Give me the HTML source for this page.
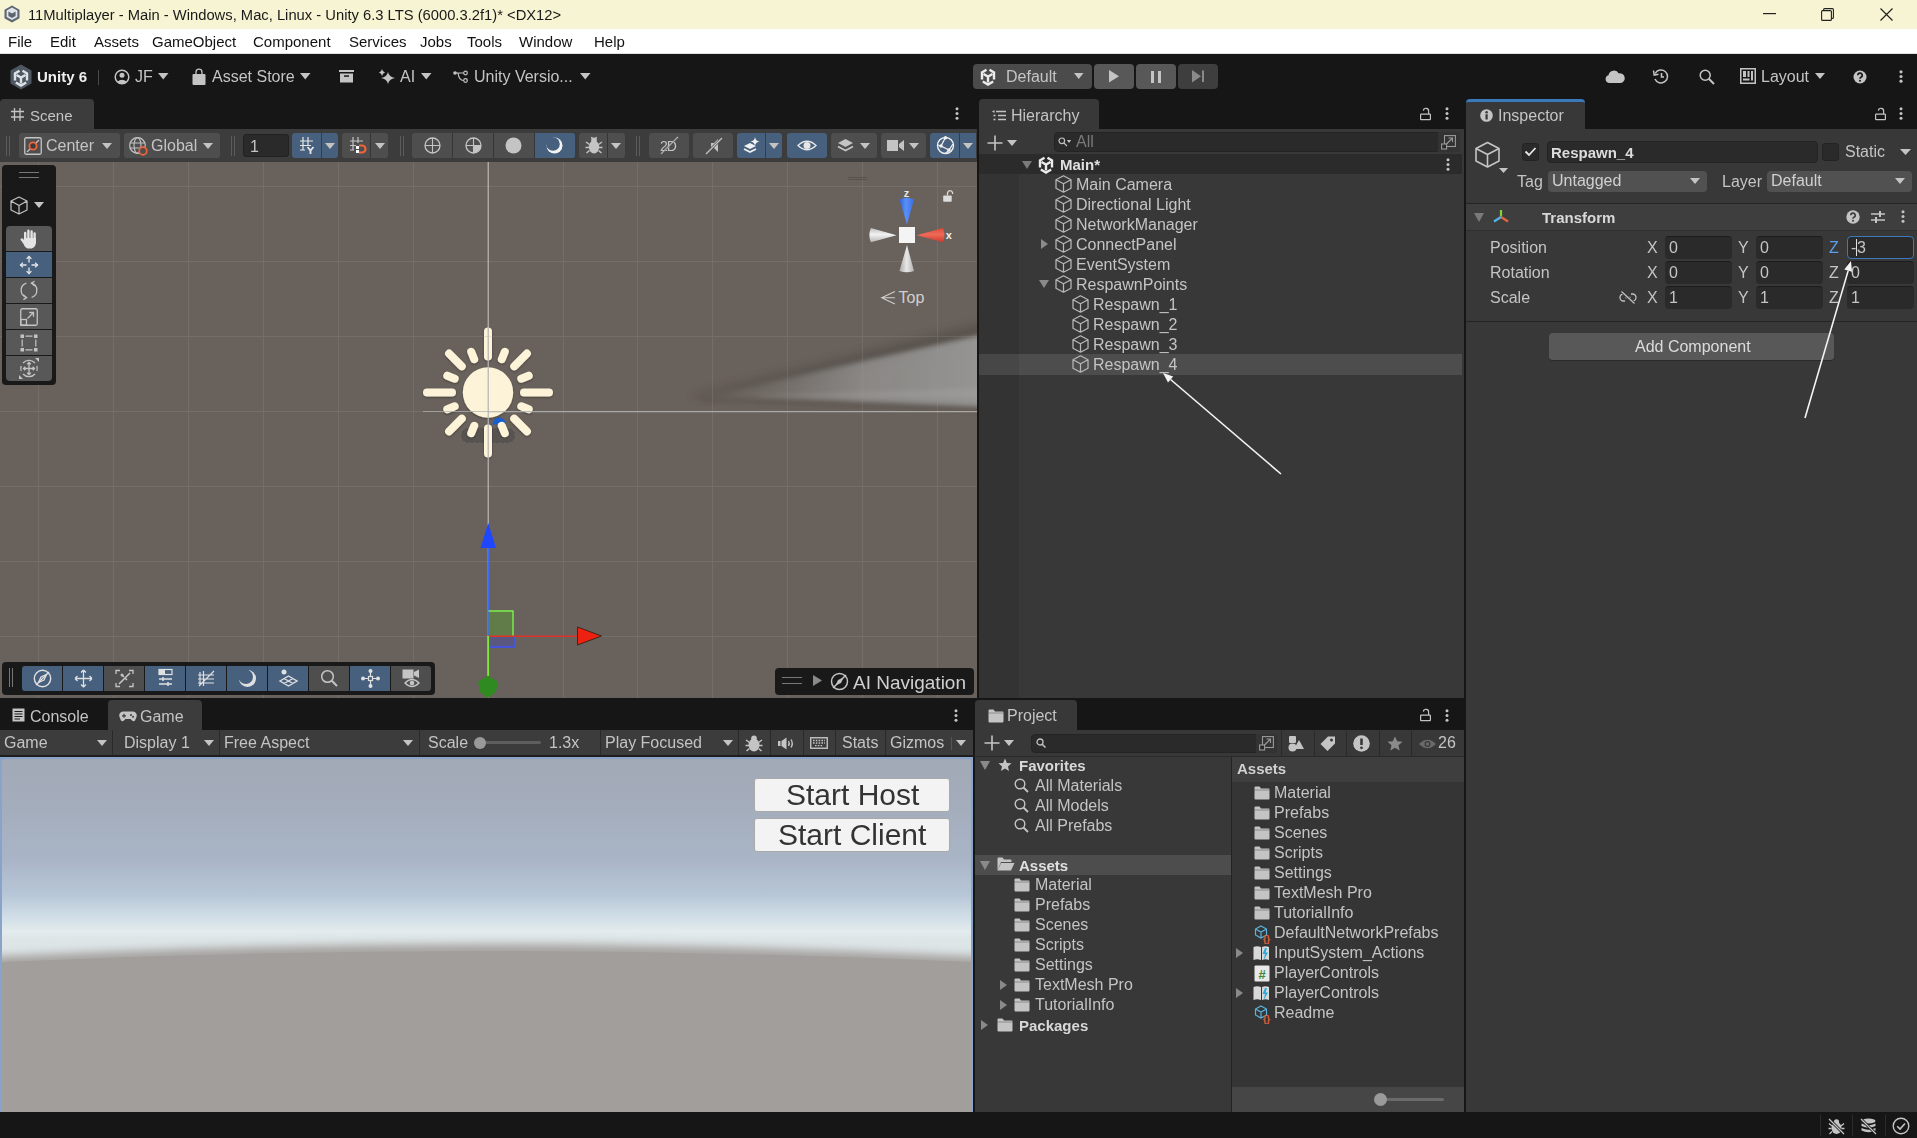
<!DOCTYPE html>
<html><head><meta charset="utf-8">
<style>
*{box-sizing:border-box;margin:0;padding:0}
html,body{width:1917px;height:1138px;overflow:hidden;background:#161616;font-family:"Liberation Sans",sans-serif;font-size:15px;color:#c4c4c4}
.a{position:absolute}
.t{position:absolute;white-space:pre;line-height:1;will-change:transform}
svg{position:absolute;overflow:visible}
#title{left:0;top:0;width:1917px;height:29px;background:#f7f4d3}
#menu{left:0;top:29px;width:1917px;height:25px;background:#fff;border-bottom:1px solid #e0e0e0}
#tb{left:0;top:54px;width:1917px;height:45px;background:#161616}
</style></head><body>
<div id="title" class="a">
  <svg style="left:3px;top:5px" width="18" height="18" viewBox="0 0 18 18"><path d="M9,0.5 L16.5,4.8 V13.2 L9,17.5 L1.5,13.2 V4.8Z" fill="#5d6670"/><path d="M9,3.5 L13.5,6 V11.5 L9,14 L4.5,11.5 V6Z" fill="none" stroke="#dfe3e8" stroke-width="1.8"/><path d="M9,3.5 L13.5,6 L9,8.5 L4.5,6Z" fill="#dfe3e8"/></svg>
  <svg style="left:1763px;top:13px" width="13" height="2"><rect width="13" height="1.2" fill="#222"/></svg>
  <svg style="left:1821px;top:8px" width="13" height="13" viewBox="0 0 13 13"><rect x="0.6" y="2.6" width="9.8" height="9.8" rx="1" fill="none" stroke="#222" stroke-width="1.1"/><path d="M2.6,2.6 V1.6 Q2.6,0.6 3.6,0.6 H11.4 Q12.4,0.6 12.4,1.6 V9.4 Q12.4,10.4 11.4,10.4 H10.4" fill="none" stroke="#222" stroke-width="1.1"/></svg>
  <svg style="left:1880px;top:8px" width="13" height="13" viewBox="0 0 13 13"><path d="M0.5,0.5 L12.5,12.5 M12.5,0.5 L0.5,12.5" stroke="#222" stroke-width="1.2"/></svg>
  <div class="t" style="left:28px;top:8px;font-size:14.75px;color:#1a1a1a">11Multiplayer - Main - Windows, Mac, Linux - Unity 6.3 LTS (6000.3.2f1)* &lt;DX12&gt;</div>
</div>
<div id="menu" class="a">
  <div class="t" style="left:8px;top:5px;color:#111">File</div>
  <div class="t" style="left:50px;top:5px;color:#111">Edit</div>
  <div class="t" style="left:94px;top:5px;color:#111">Assets</div>
  <div class="t" style="left:152px;top:5px;color:#111">GameObject</div>
  <div class="t" style="left:253px;top:5px;color:#111">Component</div>
  <div class="t" style="left:349px;top:5px;color:#111">Services</div>
  <div class="t" style="left:420px;top:5px;color:#111">Jobs</div>
  <div class="t" style="left:467px;top:5px;color:#111">Tools</div>
  <div class="t" style="left:519px;top:5px;color:#111">Window</div>
  <div class="t" style="left:594px;top:5px;color:#111">Help</div>
</div>
<div id="tb" class="a">
  <!-- unity logo -->
  <svg style="left:10px;top:10px" width="22" height="26" viewBox="0 0 22 26">
    <polygon points="11,0.5 21.5,6.5 21.5,19.5 11,25.5 0.5,19.5 0.5,6.5" fill="#4f5862"/>
    <g transform="translate(-1,1)" fill="none" stroke="#dfe3e8" stroke-width="2.4"><path d="M6,15.5 V8.5 L10.5,5.8"/><path d="M18,15.5 V8.5 L13.5,5.8"/><path d="M7.5,10 L12,12.6 L16.5,10 M12,12.6 V18.5"/><path d="M6.8,17.5 L12,20.5 L17.2,17.5"/></g>
  </svg>
  <div class="t" style="left:37px;top:15px;font-weight:700;color:#f0f0f0;font-size:15px">Unity 6</div>
  <div class="a" style="left:98px;top:16px;width:1px;height:15px;background:#4a4a4a"></div>
  <svg style="left:114px;top:15px" width="16" height="16" viewBox="0 0 16 16">
    <circle cx="8" cy="8" r="6.8" fill="none" stroke="#c4c4c4" stroke-width="1.5"/>
    <circle cx="8" cy="6.3" r="2.5" fill="#c4c4c4"/>
    <path d="M3.2,12.8 Q8,8.5 12.8,12.8 L11,14.5 L5,14.5 Z" fill="#c4c4c4"/>
  </svg>
  <div class="t" style="left:135px;top:15px;color:#c4c4c4;font-size:16px">JF</div>
  <svg style="left:158px;top:19px" width="11" height="7"><path d="M0,0 L10.5,0 L5.25,6.5Z" fill="#c4c4c4"/></svg>
  <svg style="left:192px;top:15px" width="14" height="16" viewBox="0 0 14 16">
    <path d="M4,5 V3.2 A3,3 0 0 1 10,3.2 V5" fill="none" stroke="#c4c4c4" stroke-width="1.3"/>
    <rect x="0.5" y="5" width="13" height="11" rx="1" fill="#c4c4c4"/>
  </svg>
  <div class="t" style="left:212px;top:15px;color:#c4c4c4;font-size:16px">Asset Store</div>
  <svg style="left:300px;top:19px" width="11" height="7"><path d="M0,0 L10.5,0 L5.25,6.5Z" fill="#c4c4c4"/></svg>
  <svg style="left:339px;top:16px" width="15" height="13" viewBox="0 0 15 13">
    <rect x="0" y="0" width="15" height="2" fill="#c4c4c4"/>
    <rect x="1" y="3.5" width="13" height="9" fill="#c4c4c4"/>
    <rect x="5" y="5.3" width="5" height="1.5" fill="#191919"/>
  </svg>
  <svg style="left:378px;top:15px" width="18" height="15" viewBox="0 0 18 15">
    <path d="M10,3 Q11,8 17,9 Q11,10 10,15 Q9,10 3,9 Q9,8 10,3Z" fill="#c4c4c4"/>
    <path d="M4,0 Q4.5,3 7,3.5 Q4.5,4 4,7 Q3.5,4 1,3.5 Q3.5,3 4,0Z" fill="#c4c4c4"/>
  </svg>
  <div class="t" style="left:400px;top:15px;color:#c4c4c4;font-size:16px">AI</div>
  <svg style="left:421px;top:19px" width="11" height="7"><path d="M0,0 L10.5,0 L5.25,6.5Z" fill="#c4c4c4"/></svg>
  <svg style="left:453px;top:16px" width="15" height="13" viewBox="0 0 15 13">
    <circle cx="2" cy="3" r="1.8" fill="#c4c4c4"/>
    <circle cx="12.5" cy="3" r="1.8" fill="none" stroke="#c4c4c4" stroke-width="1.2"/>
    <circle cx="12.5" cy="10.5" r="1.8" fill="none" stroke="#c4c4c4" stroke-width="1.2"/>
    <path d="M2,3 H10.5 M5,3 Q6,10.5 10.5,10.5" fill="none" stroke="#c4c4c4" stroke-width="1.2"/>
  </svg>
  <div class="t" style="left:474px;top:15px;color:#c4c4c4;font-size:16px">Unity Versio...</div>
  <svg style="left:580px;top:19px" width="11" height="7"><path d="M0,0 L10.5,0 L5.25,6.5Z" fill="#c4c4c4"/></svg>

  <!-- play controls -->
  <div class="a" style="left:973px;top:10px;width:119px;height:25px;background:#4b4b4b;border-radius:4px"></div>
  <svg style="left:976px;top:10px" width="24" height="24" viewBox="0 0 24 24"><g fill="none" stroke="#ececec" stroke-width="2.4"><path d="M6,15.5 V8.5 L10.5,5.8"/><path d="M18,15.5 V8.5 L13.5,5.8"/><path d="M7.5,10 L12,12.6 L16.5,10 M12,12.6 V18.5"/><path d="M6.8,17.5 L12,20.5 L17.2,17.5"/></g></svg>
  <div class="t" style="left:1006px;top:15px;color:#c4c4c4;font-size:16px">Default</div>
  <svg style="left:1074px;top:19px" width="11" height="7"><path d="M0,0 L9.5,0 L4.75,6Z" fill="#c4c4c4"/></svg>
  <div class="a" style="left:1094px;top:10px;width:40px;height:25px;background:#585858;border-radius:4px"></div>
  <svg style="left:1109px;top:16px" width="11" height="13"><path d="M0,0 L10,6.2 L0,12.4Z" fill="#c4c4c4"/></svg>
  <div class="a" style="left:1136px;top:10px;width:40px;height:25px;background:#585858;border-radius:4px"></div>
  <div class="a" style="left:1151px;top:17px;width:3px;height:12px;background:#c4c4c4"></div>
  <div class="a" style="left:1158px;top:17px;width:3px;height:12px;background:#c4c4c4"></div>
  <div class="a" style="left:1178px;top:10px;width:40px;height:25px;background:#3e3e3e;border-radius:4px"></div>
  <svg style="left:1192px;top:16px" width="13" height="13"><path d="M0,0 L9,6.2 L0,12.4Z" fill="#8a8a8a"/><rect x="10" y="0.5" width="2" height="11.5" fill="#8a8a8a"/></svg>

  <!-- right -->
  <svg style="left:1605px;top:16px" width="20" height="13" viewBox="0 0 20 13">
    <path d="M4,13 A4,4 0 0 1 3.5,5.2 A5.5,5.5 0 0 1 13.8,3.5 A4.5,4.5 0 0 1 16,13Z" fill="#c4c4c4"/>
  </svg>
  <svg style="left:1653px;top:15px" width="16" height="15" viewBox="0 0 16 15">
    <path d="M2.2,4.5 A6.5,6.5 0 1 1 2,10" fill="none" stroke="#c4c4c4" stroke-width="1.5"/>
    <path d="M0.5,1.5 L1.2,6 L5.5,5.2" fill="none" stroke="#c4c4c4" stroke-width="1.5"/>
    <path d="M8.5,4 V8 H11" fill="none" stroke="#c4c4c4" stroke-width="1.6"/>
  </svg>
  <svg style="left:1699px;top:15px" width="16" height="16" viewBox="0 0 16 16">
    <circle cx="6.2" cy="6.2" r="5" fill="none" stroke="#c4c4c4" stroke-width="1.5"/>
    <path d="M9.8,9.8 L15,15" stroke="#c4c4c4" stroke-width="2"/>
  </svg>
  <svg style="left:1740px;top:14px" width="16" height="16" viewBox="0 0 16 16">
    <rect x="0.75" y="0.75" width="14.5" height="14.5" fill="none" stroke="#c4c4c4" stroke-width="1.5"/>
    <rect x="3" y="3" width="3" height="6" fill="#c4c4c4"/><rect x="7.5" y="3" width="2" height="6" fill="#c4c4c4"/>
    <rect x="11" y="3" width="2" height="9.5" fill="#c4c4c4"/><rect x="3" y="10.5" width="6.5" height="2" fill="#c4c4c4"/>
  </svg>
  <div class="t" style="left:1761px;top:15px;color:#c4c4c4;font-size:16px">Layout</div>
  <svg style="left:1815px;top:19px" width="11" height="7"><path d="M0,0 L10,0 L5,6Z" fill="#c4c4c4"/></svg>
  <svg style="left:1853px;top:16px" width="14" height="14" viewBox="0 0 14 14">
    <circle cx="7" cy="7" r="6.5" fill="#c4c4c4"/>
    <path d="M4.8,5.3 A2.2,2.2 0 1 1 7.8,7.3 Q7,7.7 7,8.8" fill="none" stroke="#191919" stroke-width="1.7"/>
    <circle cx="7" cy="10.8" r="1" fill="#191919"/>
  </svg>
  <svg style="left:1899px;top:16px" width="4" height="13"><circle cx="2" cy="1.8" r="1.6" fill="#c4c4c4"/><circle cx="2" cy="6.5" r="1.6" fill="#c4c4c4"/><circle cx="2" cy="11.2" r="1.6" fill="#c4c4c4"/></svg>
</div>


<!-- Scene panel -->
<div class="a" style="left:0;top:99px;width:94px;height:30px;background:#3c3c3c;border-radius:4px 4px 0 0"></div>
<svg style="left:11px;top:108px" width="13" height="13" viewBox="0 0 13 13"><path d="M3.5,0V13M9,0V13M0,3.5H13M0,9H13" stroke="#c4c4c4" stroke-width="1.3"/></svg>
<div class="t" style="left:30px;top:108px;color:#c4c4c4">Scene</div>
<svg style="left:955px;top:107px" width="4" height="13"><circle cx="2" cy="1.8" r="1.5" fill="#c4c4c4"/><circle cx="2" cy="6.5" r="1.5" fill="#c4c4c4"/><circle cx="2" cy="11.2" r="1.5" fill="#c4c4c4"/></svg>
<div class="a" style="left:0;top:129px;width:977px;height:33px;background:#3c3c3c"></div>
<div class="a" style="left:0;top:162px;width:977px;height:536px;background:#69615b;overflow:hidden"><svg style="left:0;top:0" width="977" height="536" viewBox="0 0 977 536"><defs>
<linearGradient id="lg1" x1="0" y1="0" x2="1" y2="0">
<stop offset="0" stop-color="#8f8e8c" stop-opacity="0"/>
<stop offset="0.25" stop-color="#8f8e8c" stop-opacity="0.3"/>
<stop offset="0.55" stop-color="#92918f" stop-opacity="0.8"/>
<stop offset="1" stop-color="#969593" stop-opacity="1"/>
</linearGradient>
<filter id="bl1" x="-50%" y="-50%" width="200%" height="200%"><feGaussianBlur stdDeviation="5"/></filter>
<filter id="bl2" x="-50%" y="-50%" width="200%" height="200%"><feGaussianBlur stdDeviation="2.5"/></filter>
<filter id="sh" x="-50%" y="-50%" width="200%" height="200%"><feDropShadow dx="0" dy="1" stdDeviation="1.2" flood-color="#000" flood-opacity="0.35"/></filter>
</defs><path d="M690,234 L985,160 L985,182 L700,236Z" fill="#45403c" opacity="0.45" filter="url(#bl1)"/>
<path d="M700,237 L985,240 L985,249 L700,239Z" fill="#45403c" opacity="0.35" filter="url(#bl2)"/>
<path d="M712,233 L985,172 L985,245 L712,234Z" fill="url(#lg1)" filter="url(#bl2)"/>
<path d="M760,234 L985,226 L985,236 L760,235Z" fill="#a9a8a6" opacity="0.35" filter="url(#bl2)"/><rect x="461" y="266" width="54" height="15" rx="7" fill="#4a4a4a" opacity="0.6"/><rect x="461" y="266" width="54" height="15" rx="7" fill="none" stroke="#6e6e6e" stroke-width="0.8" stroke-dasharray="2 3"/>
<path d="M492.5,262.5 A6.7,7 0 0 1 506,262.5 Z" fill="#1a5fd0"/>
<g filter="url(#sh)"><path d="M524.0,230.5L549.0,230.5 M521.3,244.3L528.7,247.3 M514.2,256.7L526.9,269.4 M501.8,263.8L504.8,271.2 M488.0,266.5L488.0,291.5 M474.2,263.8L471.2,271.2 M461.8,256.7L449.1,269.4 M454.7,244.3L447.3,247.3 M452.0,230.5L427.0,230.5 M454.7,216.7L447.3,213.7 M461.8,204.3L449.1,191.6 M474.2,197.2L471.2,189.8 M488.0,194.5L488.0,169.5 M501.8,197.2L504.8,189.8 M514.2,204.3L526.9,191.6 M521.3,216.7L528.7,213.7" stroke="#fdf3d8" stroke-width="8" stroke-linecap="round"/>
<circle cx="488" cy="230.5" r="25.2" fill="#fdf3d8"/></g>
<g fill="#a29d99" opacity="0.22"><rect x="38" y="0" width="1" height="536"/><rect x="113" y="0" width="1" height="536"/><rect x="188" y="0" width="1" height="536"/><rect x="263" y="0" width="1" height="536"/><rect x="338" y="0" width="1" height="536"/><rect x="413" y="0" width="1" height="536"/><rect x="563" y="0" width="1" height="536"/><rect x="637" y="0" width="1" height="536"/><rect x="712" y="0" width="1" height="536"/><rect x="787" y="0" width="1" height="536"/><rect x="862" y="0" width="1" height="536"/><rect x="937" y="0" width="1" height="536"/><rect x="0" y="24" width="977" height="1"/><rect x="0" y="99" width="977" height="1"/><rect x="0" y="174" width="977" height="1"/><rect x="0" y="249" width="488" height="1"/><rect x="0" y="324" width="977" height="1"/><rect x="0" y="399" width="977" height="1"/><rect x="0" y="474" width="977" height="1"/></g><rect x="488" y="0" width="1" height="536" fill="#b4b4b4" opacity="0.86"/><rect x="487" y="0" width="1" height="536" fill="#b4b4b4" opacity="0.4"/><rect x="423" y="249" width="65" height="1" fill="#b4b4b4" opacity="0.7"/><rect x="488" y="249" width="489" height="1" fill="#b4b4b4" opacity="0.86"/><rect x="488" y="250" width="489" height="1" fill="#acabaa" opacity="0.25"/><defs>
<linearGradient id="gzb" x1="0" y1="0" x2="1" y2="0"><stop offset="0" stop-color="#2f62d8"/><stop offset="0.45" stop-color="#5b8ff8"/><stop offset="1" stop-color="#3a6ee0"/></linearGradient>
<linearGradient id="gzr" x1="0" y1="0" x2="0" y2="1"><stop offset="0" stop-color="#d84a3a"/><stop offset="0.45" stop-color="#f06a58"/><stop offset="1" stop-color="#c83a2c"/></linearGradient>
<linearGradient id="gzg" x1="0" y1="0" x2="0" y2="1"><stop offset="0" stop-color="#bdbdbd"/><stop offset="0.45" stop-color="#f2f2f2"/><stop offset="1" stop-color="#b5b5b5"/></linearGradient>
<linearGradient id="gzg2" x1="0" y1="0" x2="1" y2="0"><stop offset="0" stop-color="#a8a8a8"/><stop offset="0.5" stop-color="#e8e8e8"/><stop offset="1" stop-color="#b0b0b0"/></linearGradient>
</defs>
<rect x="848" y="15" width="19" height="1" fill="#57524d"/>
<rect x="848" y="17" width="19" height="1" fill="#57524d"/>
<path d="M899.4,37.4 Q906.7,34 914,37.4 L907,62.6Z" fill="url(#gzb)"/>
<path d="M942.9,66 Q946,73.2 942.9,80.3 L916.6,73.2Z" fill="url(#gzr)"/>
<path d="M870.9,66 Q867.8,73.2 870.9,80.3 L896.6,73.2Z" fill="url(#gzg)"/>
<path d="M899.4,108.9 Q906.7,111.8 914,108.9 L907,83.1Z" fill="url(#gzg2)"/>
<rect x="899" y="65" width="16" height="16" fill="#f4f4f4"/>
<text x="906.6" y="34.6" font-family="Liberation Sans" font-weight="700" font-size="11" fill="#e8e8e8" text-anchor="middle">z</text>
<text x="948.8" y="77.2" font-family="Liberation Sans" font-weight="700" font-size="11" fill="#f0f0f0" text-anchor="middle">x</text>
<path d="M947.5,33.2 V30.8 A2.6,2.6 0 0 1 952.6,30.8 V32" fill="none" stroke="#dcdcdc" stroke-width="1.3"/>
<rect x="943.2" y="33.4" width="8.5" height="6.4" rx="0.8" fill="#dcdcdc"/>
<path d="M894.9,129.4 L881.7,135.8 L894.9,142 M881.7,135.8 L894.9,135.8" fill="none" stroke="#cfcfcf" stroke-width="1.1"/>
<text x="898.5" y="141" font-family="Liberation Sans" font-size="16" fill="#d0d0d0">Top</text><rect x="487.5" y="386" width="1.6" height="88" fill="#3d6bff"/>
<path d="M480.5,386 L488.3,361 L496,386Z" fill="#1f47ff"/>
<rect x="488.5" y="449" width="25" height="25" fill="#5d8a3f" opacity="0.65"/>
<path d="M488.5,449 H513 V474" fill="none" stroke="#7cf04a" stroke-width="1.4"/>
<rect x="488.5" y="474" width="25.5" height="11" fill="#55558c" opacity="0.75"/>
<path d="M488.5,485 H514 V474" fill="none" stroke="#3a52ff" stroke-width="1.4"/>
<rect x="488" y="473.5" width="90" height="1.5" fill="#e0322a"/>
<path d="M577.5,465 L601.5,474 L577.5,483Z" fill="#ee2010" stroke="#221" stroke-width="0.8"/>
<rect x="487.3" y="474" width="1.8" height="42" fill="#7ce83c"/>
<path d="M478,520 L488,513.5 L498,520 L496,530 L488,536 L480,530Z" fill="#2f8a1f"/></svg></div>

<div class="a" style="left:6px;top:136px;width:1px;height:20px;background:#5c5c5c"></div><div class="a" style="left:9px;top:136px;width:1px;height:20px;background:#5c5c5c"></div>
<div class="a" style="left:19px;top:133px;width:101px;height:25px;background:#4e4e4e;border-radius:3px"></div>
<svg style="left:24px;top:137px" width="18" height="18" viewBox="0 0 18 18"><rect x="0.75" y="0.75" width="16.5" height="16.5" rx="1.5" fill="none" stroke="#c4c4c4" stroke-width="1.3"/><path d="M3,15 L15,3" stroke="#c4c4c4" stroke-width="1.2"/><circle cx="9" cy="9" r="3.6" fill="#3c3c3c" stroke="#f0643a" stroke-width="1.8"/></svg>
<div class="t" style="left:46px;top:138px;font-size:16px;color:#c4c4c4">Center</div>
<svg style="left:102px;top:143px" width="10" height="6"><path d="M0,0 L10,0 L5.0,6Z" fill="#c4c4c4"/></svg>
<div class="a" style="left:124px;top:133px;width:96px;height:25px;background:#4e4e4e;border-radius:3px"></div>
<svg style="left:129px;top:137px" width="19" height="19" viewBox="0 0 19 19"><circle cx="8.5" cy="8.5" r="7.8" fill="none" stroke="#c4c4c4" stroke-width="1.2"/><ellipse cx="8.5" cy="8.5" rx="3.5" ry="7.8" fill="none" stroke="#c4c4c4" stroke-width="1.1"/><path d="M0.7,6H16.3M0.7,11H16.3" stroke="#c4c4c4" stroke-width="1.1"/><circle cx="14" cy="14" r="3.8" fill="#4e4e4e" stroke="#f0643a" stroke-width="1.7"/></svg>
<div class="t" style="left:151px;top:138px;font-size:16px;color:#c4c4c4">Global</div>
<svg style="left:203px;top:143px" width="10" height="6"><path d="M0,0 L10,0 L5.0,6Z" fill="#c4c4c4"/></svg>
<div class="a" style="left:231px;top:136px;width:1px;height:20px;background:#5c5c5c"></div><div class="a" style="left:234px;top:136px;width:1px;height:20px;background:#5c5c5c"></div>
<div class="a" style="left:243px;top:134px;width:46px;height:23px;background:#2a2a2a;border:1px solid #212121;border-radius:3px"></div>
<div class="t" style="left:250px;top:139px;font-size:16px;color:#c4c4c4">1</div>
<div class="a" style="left:292px;top:133px;width:46px;height:25px;background:#46607e;border-radius:3px"></div>
<div class="a" style="left:321px;top:133px;width:1px;height:25px;background:#2f3f52"></div>
<svg style="left:299px;top:137px" width="17" height="17" viewBox="0 0 17 17"><path d="M4,0V13M9,0V9M1,4H14M1,8.5H12M1,13H6" stroke="#e6e6e6" stroke-width="1.2"/><path d="M8.5,10 L11.5,13.5 L14.5,10 M11.5,13.5V17" stroke="#e6e6e6" stroke-width="1.8" fill="none"/></svg>
<svg style="left:325px;top:143px" width="10" height="6"><path d="M0,0 L10,0 L5.0,6Z" fill="#c4c4c4"/></svg>
<div class="a" style="left:342px;top:133px;width:46px;height:25px;background:#4e4e4e;border-radius:3px"></div>
<div class="a" style="left:370px;top:133px;width:1px;height:25px;background:#363636"></div>
<svg style="left:349px;top:137px" width="17" height="17" viewBox="0 0 17 17"><path d="M4,0V13M9,0V6M1,4H14M1,8.5H7M1,13H5" stroke="#c4c4c4" stroke-width="1.2"/><rect x="7" y="9" width="3" height="3" fill="#fff"/><rect x="7" y="13" width="3" height="3" fill="#fff"/><path d="M10,8.5 H13 A3.5,3.5 0 0 1 13,15.5 H10" fill="none" stroke="#f0643a" stroke-width="2.2"/></svg>
<svg style="left:375px;top:143px" width="10" height="6"><path d="M0,0 L10,0 L5.0,6Z" fill="#c4c4c4"/></svg>
<div class="a" style="left:400px;top:136px;width:1px;height:20px;background:#5c5c5c"></div><div class="a" style="left:403px;top:136px;width:1px;height:20px;background:#5c5c5c"></div>
<div class="a" style="left:412px;top:133px;width:163px;height:25px;background:#4e4e4e;border-radius:3px"></div>
<div class="a" style="left:534px;top:133px;width:41px;height:25px;background:#46607e;border-radius:0 3px 3px 0"></div>
<div class="a" style="left:452px;top:133px;width:1px;height:25px;background:#363636"></div>
<div class="a" style="left:493px;top:133px;width:1px;height:25px;background:#363636"></div>
<div class="a" style="left:534px;top:133px;width:1px;height:25px;background:#363636"></div>
<svg style="left:424px;top:137px" width="17" height="17" viewBox="0 0 17 17"><circle cx="8.5" cy="8.5" r="7.5" fill="none" stroke="#c4c4c4" stroke-width="1.3"/><path d="M1,8.5H16 M8.5,1 V16" stroke="#c4c4c4" stroke-width="1.1"/><path d="M4,3 Q8.5,8.5 4,14" fill="none" stroke="#c4c4c4" stroke-width="0"/></svg>
<svg style="left:465px;top:137px" width="17" height="17" viewBox="0 0 17 17"><circle cx="8.5" cy="8.5" r="7.5" fill="none" stroke="#c4c4c4" stroke-width="1.3"/><path d="M8.5,8.5 H16 A7.5,7.5 0 0 1 8.5,16Z" fill="#c4c4c4"/><path d="M1,8.5H16 M8.5,1 V16" stroke="#c4c4c4" stroke-width="1.1"/></svg>
<svg style="left:505px;top:137px" width="17" height="17" viewBox="0 0 17 17"><circle cx="8.5" cy="8.5" r="8" fill="#c4c4c4"/></svg>
<svg style="left:546px;top:137px" width="17" height="17" viewBox="0 0 17 17"><circle cx="8.5" cy="8.5" r="8" fill="#f2f2f2"/><circle cx="7" cy="7" r="6.8" fill="#46607e"/></svg>
<div class="a" style="left:579px;top:133px;width:46px;height:25px;background:#4e4e4e;border-radius:3px"></div>
<div class="a" style="left:607px;top:133px;width:1px;height:25px;background:#363636"></div>
<svg style="left:585px;top:136px" width="18" height="19" viewBox="0 0 18 19"><ellipse cx="9" cy="11" rx="5.2" ry="6.5" fill="#c4c4c4"/><circle cx="9" cy="4.2" r="2.8" fill="#c4c4c4"/><path d="M1,6 L4.5,8.5 M17,6 L13.5,8.5 M0.5,11.5H4 M17.5,11.5H14 M1.5,17 L4.5,14.5 M16.5,17 L13.5,14.5 M6.5,1 L7.5,3 M11.5,1 L10.5,3" stroke="#c4c4c4" stroke-width="1.5"/></svg>
<svg style="left:611px;top:143px" width="10" height="6"><path d="M0,0 L10,0 L5.0,6Z" fill="#c4c4c4"/></svg>
<div class="a" style="left:636px;top:136px;width:1px;height:20px;background:#5c5c5c"></div><div class="a" style="left:639px;top:136px;width:1px;height:20px;background:#5c5c5c"></div>
<div class="a" style="left:649px;top:133px;width:40px;height:25px;background:#4e4e4e;border-radius:3px"></div>
<div class="t" style="left:660px;top:139px;font-size:14px;color:#c4c4c4;letter-spacing:-1px">2D</div>
<svg style="left:661px;top:137px" width="18" height="17" viewBox="0 0 18 17"><path d="M0,17 L17,0" stroke="#c4c4c4" stroke-width="1.3"/><path d="M0,17.6 L17,0.6" stroke="#4e4e4e" stroke-width="0.6"/></svg>
<div class="a" style="left:693px;top:133px;width:40px;height:25px;background:#4e4e4e;border-radius:3px"></div>
<svg style="left:705px;top:137px" width="17" height="17" viewBox="0 0 17 17"><path d="M8,6 H11 L15,2 V15 L11,11 H8Z" fill="#c4c4c4" transform="translate(-2,0)"/><path d="M1,17 L17,1" stroke="#4e4e4e" stroke-width="2.5"/><path d="M1,17 L17,1" stroke="#c4c4c4" stroke-width="1.2"/></svg>
<div class="a" style="left:737px;top:133px;width:45px;height:25px;background:#46607e;border-radius:3px"></div>
<div class="a" style="left:765px;top:133px;width:1px;height:25px;background:#2f3f52"></div>
<svg style="left:743px;top:137px" width="17" height="17" viewBox="0 0 17 17"><path d="M1,9 L7,6 L13,9 L7,12Z" fill="#f0f0f0"/><path d="M1,12 L7,15 L13,12" fill="none" stroke="#f0f0f0" stroke-width="1.8"/><path d="M12,0 Q12.5,4 16.5,4.5 Q12.5,5 12,9 Q11.5,5 7.5,4.5 Q11.5,4 12,0Z" fill="#f0f0f0"/></svg>
<svg style="left:769px;top:143px" width="10" height="6"><path d="M0,0 L10,0 L5.0,6Z" fill="#c4c4c4"/></svg>
<div class="a" style="left:787px;top:133px;width:40px;height:25px;background:#46607e;border-radius:3px"></div>
<svg style="left:797px;top:139px" width="20" height="13" viewBox="0 0 20 13"><path d="M1,6.5 Q10,-2 19,6.5 Q10,15 1,6.5Z" fill="none" stroke="#e6e6e6" stroke-width="1.4"/><circle cx="10" cy="6.5" r="3.5" fill="#e6e6e6"/></svg>
<div class="a" style="left:831px;top:133px;width:46px;height:25px;background:#4e4e4e;border-radius:3px"></div>
<svg style="left:837px;top:137px" width="17" height="17" viewBox="0 0 17 17"><path d="M1,6 L8.5,2 L16,6 L8.5,10Z" fill="#c4c4c4"/><path d="M1,9.5 L8.5,13.5 L16,9.5" fill="none" stroke="#c4c4c4" stroke-width="1.8"/></svg>
<svg style="left:860px;top:143px" width="10" height="6"><path d="M0,0 L10,0 L5.0,6Z" fill="#c4c4c4"/></svg>
<div class="a" style="left:881px;top:133px;width:45px;height:25px;background:#4e4e4e;border-radius:3px"></div>
<svg style="left:887px;top:139px" width="17" height="13" viewBox="0 0 17 13"><rect x="0" y="1" width="11" height="11" fill="#c4c4c4"/><path d="M12,5 L17,1 V12 L12,8Z" fill="#c4c4c4"/></svg>
<svg style="left:909px;top:143px" width="10" height="6"><path d="M0,0 L10,0 L5.0,6Z" fill="#c4c4c4"/></svg>
<div class="a" style="left:930px;top:133px;width:46px;height:25px;background:#46607e;border-radius:3px 0 0 3px"></div>
<div class="a" style="left:959px;top:133px;width:1px;height:25px;background:#2f3f52"></div>
<svg style="left:936px;top:136px" width="19" height="19" viewBox="0 0 19 19"><circle cx="9.5" cy="9.5" r="8" fill="none" stroke="#f0f0f0" stroke-width="1.4"/><path d="M9.5,1.5 L5,10 L13,14 L17,8 M5,10 L2,9 M13,14 L9.5,17.5" fill="none" stroke="#f0f0f0" stroke-width="1.3"/><circle cx="9.5" cy="1.8" r="1.7" fill="#f0f0f0"/><circle cx="5" cy="10" r="1.7" fill="#f0f0f0"/><circle cx="13" cy="14" r="1.7" fill="#f0f0f0"/></svg>
<svg style="left:963px;top:143px" width="10" height="6"><path d="M0,0 L10,0 L5.0,6Z" fill="#c4c4c4"/></svg>
<div class="a" style="left:2px;top:165px;width:54px;height:220px;background:#191919;border-radius:4px"></div>
<div class="a" style="left:19px;top:172px;width:20px;height:1px;background:#777"></div><div class="a" style="left:19px;top:177px;width:20px;height:1px;background:#777"></div>
<svg style="left:10px;top:196px" width="18" height="19" viewBox="0 0 18 19"><path d="M9,1 L17,5 V14 L9,18 L1,14 V5Z M1,5 L9,9.5 L17,5 M9,9.5 V18" fill="none" stroke="#c4c4c4" stroke-width="1.2" stroke-linejoin="round"/></svg>
<svg style="left:34px;top:202px" width="10" height="6"><path d="M0,0 L10,0 L5.0,6Z" fill="#c4c4c4"/></svg>
<div class="a" style="left:6px;top:226px;width:46px;height:25px;background:#585858;border-radius:4px 4px 0 0"></div>
<div class="a" style="left:6px;top:252px;width:46px;height:25px;background:#46607e;border-radius:0"></div>
<div class="a" style="left:6px;top:278px;width:46px;height:25px;background:#585858;border-radius:0"></div>
<div class="a" style="left:6px;top:304px;width:46px;height:25px;background:#585858;border-radius:0"></div>
<div class="a" style="left:6px;top:330px;width:46px;height:25px;background:#585858;border-radius:0"></div>
<div class="a" style="left:6px;top:356px;width:46px;height:25px;background:#585858;border-radius:0 0 4px 4px"></div>
<svg style="left:19px;top:228px" width="20" height="22" viewBox="0 0 20 22"><g stroke="#e4e4e4" stroke-width="2.4" stroke-linecap="round"><path d="M6.2,5 V11 M9.4,2.8 V10.5 M12.6,3.5 V10.5 M15.6,5.5 V11.5"/><path d="M2.8,11.5 L5.5,15"/></g><path d="M4.8,10 H17 V14.5 Q16.5,19.5 12.5,20.5 H8.5 Q5.5,19.5 4.5,15.5Z" fill="#e4e4e4"/></svg>
<svg style="left:19px;top:255px" width="20" height="20" viewBox="0 0 20 20"><g stroke="#e8e8e8" stroke-width="1.3" fill="none"><path d="M10,1.5V7.5M10,12.5V18.5M1.5,10H7.5M12.5,10H18.5"/><path d="M7.6,3.9L10,1.5L12.4,3.9M7.6,16.1L10,18.5L12.4,16.1M3.9,7.6L1.5,10L3.9,12.4M16.1,7.6L18.5,10L16.1,12.4"/></g></svg>
<svg style="left:20px;top:281px" width="18" height="19" viewBox="0 0 18 19"><g fill="none" stroke="#c4c4c4" stroke-width="1.3"><path d="M6.4,2.2 A7.5,7.5 0 0 0 6.4,16.5"/><path d="M11.6,16.5 A7.5,7.5 0 0 0 11.6,2.2"/><path d="M3.2,13.8 L6.6,16.6 L3.4,18.6"/><path d="M14.8,4.9 L11.4,2.1 L14.6,0.2"/></g></svg>
<svg style="left:20px;top:308px" width="18" height="18" viewBox="0 0 18 18"><rect x="0.75" y="0.75" width="16.5" height="16.5" rx="1.5" fill="none" stroke="#c4c4c4" stroke-width="1.3"/><rect x="0.75" y="11.5" width="5.75" height="5.75" fill="none" stroke="#c4c4c4" stroke-width="1.3"/><path d="M7.5,10.5 L13.5,4.5 M9.2,4.5 H13.5 V8.8" fill="none" stroke="#c4c4c4" stroke-width="1.3"/></svg>
<svg style="left:20px;top:334px" width="18" height="18" viewBox="0 0 18 18"><g fill="#c4c4c4"><rect x="0.5" y="0.5" width="3.5" height="3.5"/><rect x="14" y="0.5" width="3.5" height="3.5"/><rect x="0.5" y="14" width="3.5" height="3.5"/><rect x="14" y="14" width="3.5" height="3.5"/></g><path d="M5.5,2.2H12.5M5.5,15.8H12.5M2.2,5.5V12.5M15.8,5.5V12.5" stroke="#c4c4c4" stroke-width="1.2"/></svg>
<svg style="left:19px;top:358px" width="20" height="21" viewBox="0 0 20 21"><g fill="none" stroke="#c4c4c4" stroke-width="1.3"><path d="M4,5 A8,8 0 0 1 16,5 M16,16 A8,8 0 0 1 4,16 M2.2,13 A8,8 0 0 1 2.2,8 M17.8,8 A8,8 0 0 1 17.8,13"/><path d="M10,4.5V16.5M4.5,10.5H15.5M8.2,6.3L10,4.5L11.8,6.3M8.2,14.7L10,16.5L11.8,14.7M6.3,8.7L4.5,10.5L6.3,12.3M13.7,8.7L15.5,10.5L13.7,12.3"/></g><path d="M0,21 H4 L0,17Z M20,0 H16 L20,4Z" fill="#c4c4c4"/></svg>
<div class="a" style="left:2px;top:662px;width:433px;height:33px;background:#191919;border-radius:4px"></div>
<div class="a" style="left:9px;top:668px;width:1px;height:19px;background:#777"></div><div class="a" style="left:12px;top:668px;width:1px;height:19px;background:#777"></div>
<div class="a" style="left:22px;top:666px;width:40px;height:25px;background:#46607e;border-radius:3px 0 0 3px"></div>
<div class="a" style="left:63px;top:666px;width:40px;height:25px;background:#46607e;border-radius:0"></div>
<div class="a" style="left:104px;top:666px;width:40px;height:25px;background:#4e4e4e;border-radius:0"></div>
<div class="a" style="left:145px;top:666px;width:40px;height:25px;background:#46607e;border-radius:0"></div>
<div class="a" style="left:186px;top:666px;width:40px;height:25px;background:#46607e;border-radius:0"></div>
<div class="a" style="left:227px;top:666px;width:40px;height:25px;background:#46607e;border-radius:0"></div>
<div class="a" style="left:268px;top:666px;width:40px;height:25px;background:#46607e;border-radius:0"></div>
<div class="a" style="left:309px;top:666px;width:40px;height:25px;background:#4e4e4e;border-radius:0"></div>
<div class="a" style="left:350px;top:666px;width:40px;height:25px;background:#46607e;border-radius:0"></div>
<div class="a" style="left:391px;top:666px;width:40px;height:25px;background:#4e4e4e;border-radius:0 3px 3px 0"></div>
<svg style="left:33px;top:669px" width="19" height="19" viewBox="0 0 19 19"><circle cx="9.5" cy="9.5" r="8.2" fill="none" stroke="#e0e0e0" stroke-width="1.4"/><path d="M13.5,5.5 L11,11 L5.5,13.5 L8,8Z" fill="none" stroke="#e0e0e0" stroke-width="1.3"/><path d="M3,16 L16,3" stroke="#e0e0e0" stroke-width="1.3"/></svg>
<svg style="left:74px;top:669px" width="19" height="19" viewBox="0 0 19 19"><path d="M9.5,1V18M1,9.5H18M9.5,1L7,3.5M9.5,1L12,3.5M9.5,18L7,15.5M9.5,18L12,15.5M1,9.5L3.5,7M1,9.5L3.5,12M18,9.5L15.5,7M18,9.5L15.5,12" stroke="#e0e0e0" stroke-width="1.3" fill="none"/></svg>
<svg style="left:115px;top:669px" width="19" height="19" viewBox="0 0 19 19"><path d="M1,5 V1.5 H5 M14,1.5 H18 V5 M1,14 V17.5 H5 M14,17.5 H18 V14" fill="none" stroke="#c4c4c4" stroke-width="1.3"/><path d="M4,15 L15,4 M7,6 L9,8 M10,9 L12,11" stroke="#c4c4c4" stroke-width="1.6"/><circle cx="7" cy="6" r="1.5" fill="#c4c4c4"/></svg>
<svg style="left:156px;top:669px" width="19" height="19" viewBox="0 0 19 19"><rect x="3" y="0.5" width="13" height="5" fill="none" stroke="#e0e0e0" stroke-width="1.2"/><rect x="3" y="0.5" width="6" height="5" fill="#e0e0e0"/><path d="M3,10H16M3,15H16M7,8V12M12,13V17" stroke="#e0e0e0" stroke-width="1.5"/></svg>
<svg style="left:197px;top:669px" width="19" height="19" viewBox="0 0 19 19"><path d="M3,3V16M6.5,2V17M1,6H17M1,10H17M1,14H17M2,17 L17,2" stroke="#e0e0e0" stroke-width="1.2"/></svg>
<svg style="left:238px;top:669px" width="19" height="19" viewBox="0 0 19 19"><circle cx="9.5" cy="9.5" r="8.5" fill="#e0e0e0"/><circle cx="7.8" cy="7.8" r="7.2" fill="#46607e"/></svg>
<svg style="left:279px;top:669px" width="19" height="19" viewBox="0 0 19 19"><circle cx="5" cy="3" r="2.5" fill="#e0e0e0"/><path d="M1,12 L9.5,7 L18,12 L9.5,17Z M5,9.5 L14,14.5 M14,9.5 L5,14.5" fill="none" stroke="#e0e0e0" stroke-width="1.4"/></svg>
<svg style="left:320px;top:669px" width="19" height="19" viewBox="0 0 19 19"><circle cx="7.5" cy="7.5" r="5.8" fill="none" stroke="#c4c4c4" stroke-width="1.5"/><path d="M11.8,11.8 L17,17" stroke="#c4c4c4" stroke-width="2"/></svg>
<svg style="left:361px;top:669px" width="19" height="19" viewBox="0 0 19 19"><rect x="7.5" y="7.5" width="4" height="4" fill="none" stroke="#e0e0e0" stroke-width="1.2"/><path d="M9.5,2V7.5M9.5,11.5V17M2,9.5H7.5M11.5,9.5H17" stroke="#e0e0e0" stroke-width="1.2"/><circle cx="9.5" cy="2" r="2" fill="#e0e0e0"/><circle cx="9.5" cy="17" r="2" fill="#e0e0e0"/><circle cx="2" cy="9.5" r="2" fill="#e0e0e0"/><circle cx="17" cy="9.5" r="2" fill="#e0e0e0"/></svg>
<svg style="left:402px;top:669px" width="19" height="19" viewBox="0 0 19 19"><rect x="0.5" y="0.5" width="11" height="9" fill="#c4c4c4"/><path d="M12,3 L17,0.5 V9 L12,6.5Z" fill="#c4c4c4"/><path d="M3,14 Q10,7 17,14 Q10,21 3,14Z" fill="#4e4e4e" stroke="#c4c4c4" stroke-width="1.4"/><circle cx="10" cy="14" r="2.3" fill="#c4c4c4"/></svg>
<div class="a" style="left:775px;top:668px;width:199px;height:27px;background:#191919;border-radius:4px"></div>
<div class="a" style="left:782px;top:677px;width:20px;height:1px;background:#777"></div><div class="a" style="left:782px;top:683px;width:20px;height:1px;background:#777"></div>
<svg style="left:813px;top:675px" width="10" height="12" viewBox="0 0 10 12"><path d="M0,0 L9,5.5 L0,11Z" fill="#8a8a8a"/></svg>
<svg style="left:830px;top:672px" width="19" height="19" viewBox="0 0 19 19"><circle cx="9.5" cy="9.5" r="8" fill="none" stroke="#c4c4c4" stroke-width="1.5"/><path d="M13.5,5.5 L11,11 L5.5,13.5 L8,8Z" fill="#c4c4c4"/><path d="M3,16 L16,3" stroke="#c4c4c4" stroke-width="1.5"/></svg>
<div class="t" style="left:853px;top:673px;font-size:19px;color:#d0d0d0">AI Navigation</div>

<div class="a" style="left:108px;top:700px;width:94px;height:30px;background:#3c3c3c;border-radius:4px 4px 0 0"></div>
<svg style="left:12px;top:708px" width="13" height="14" viewBox="0 0 13 14"><rect x="0.5" y="0.5" width="12" height="13" fill="#c4c4c4"/><path d="M2.5,3.5H10.5M2.5,6H10.5M2.5,8.5H10.5M2.5,11H8" stroke="#191919" stroke-width="1.1"/></svg>
<div class="t" style="left:30px;top:709px;font-size:16px;color:#c4c4c4;">Console</div>
<svg style="left:119px;top:711px" width="18" height="11" viewBox="0 0 18 11"><path d="M4,0.5 H14 A4,4 0 0 1 17.5,6 L16,9.5 Q15,11 13,9.5 L11.5,8 H6.5 L5,9.5 Q3,11 2,9.5 L0.5,6 A4,4 0 0 1 4,0.5Z" fill="#c4c4c4"/><path d="M3,4.8H7M5,2.8V6.8" stroke="#3c3c3c" stroke-width="1.2"/><circle cx="12" cy="4" r="1" fill="#3c3c3c"/><circle cx="14" cy="5.8" r="1" fill="#3c3c3c"/></svg>
<div class="t" style="left:140px;top:709px;font-size:16px;color:#c4c4c4;">Game</div>
<svg style="left:954px;top:709px" width="4" height="13"><circle cx="2" cy="1.8" r="1.5" fill="#c4c4c4"/><circle cx="2" cy="6.5" r="1.5" fill="#c4c4c4"/><circle cx="2" cy="11.2" r="1.5" fill="#c4c4c4"/></svg>
<div class="a" style="left:0;top:730px;width:973px;height:26px;background:#3c3c3c"></div>
<div class="a" style="left:0;top:755px;width:975px;height:2px;background:#1e1e1e"></div>
<div class="a" style="left:112px;top:730px;width:1px;height:25px;background:#2a2a2a"></div>
<div class="a" style="left:219px;top:730px;width:1px;height:25px;background:#2a2a2a"></div>
<div class="a" style="left:419px;top:730px;width:1px;height:25px;background:#2a2a2a"></div>
<div class="a" style="left:600px;top:730px;width:1px;height:25px;background:#2a2a2a"></div>
<div class="a" style="left:738px;top:730px;width:1px;height:25px;background:#2a2a2a"></div>
<div class="a" style="left:770px;top:730px;width:1px;height:25px;background:#2a2a2a"></div>
<div class="a" style="left:803px;top:730px;width:1px;height:25px;background:#2a2a2a"></div>
<div class="a" style="left:835px;top:730px;width:1px;height:25px;background:#2a2a2a"></div>
<div class="a" style="left:885px;top:730px;width:1px;height:25px;background:#2a2a2a"></div>
<div class="a" style="left:951px;top:737px;width:1px;height:13px;background:#555"></div>
<div class="t" style="left:4px;top:735px;font-size:16px;color:#c4c4c4;">Game</div>
<svg style="left:97px;top:740px" width="10" height="6"><path d="M0,0 L10,0 L5.0,6Z" fill="#c4c4c4"/></svg>
<div class="t" style="left:124px;top:735px;font-size:16px;color:#c4c4c4;">Display 1</div>
<svg style="left:204px;top:740px" width="10" height="6"><path d="M0,0 L10,0 L5.0,6Z" fill="#c4c4c4"/></svg>
<div class="t" style="left:224px;top:735px;font-size:16px;color:#c4c4c4;">Free Aspect</div>
<svg style="left:403px;top:740px" width="10" height="6"><path d="M0,0 L10,0 L5.0,6Z" fill="#c4c4c4"/></svg>
<div class="t" style="left:428px;top:735px;font-size:16px;color:#c4c4c4;">Scale</div>
<div class="a" style="left:475px;top:741px;width:66px;height:3px;background:#5e5e5e;border-radius:2px"></div>
<div class="a" style="left:474px;top:737px;width:12px;height:12px;background:#999;border-radius:50%"></div>
<div class="t" style="left:549px;top:735px;font-size:16px;color:#c4c4c4;">1.3x</div>
<div class="t" style="left:605px;top:735px;font-size:16px;color:#c4c4c4;">Play Focused</div>
<svg style="left:723px;top:740px" width="10" height="6"><path d="M0,0 L10,0 L5.0,6Z" fill="#c4c4c4"/></svg>
<svg style="left:745px;top:734px" width="18" height="19" viewBox="0 0 18 19"><ellipse cx="9" cy="11" rx="5.5" ry="6.5" fill="#c4c4c4"/><circle cx="9" cy="4.2" r="2.8" fill="#c4c4c4"/><path d="M1,6 L4.5,8.5 M17,6 L13.5,8.5 M0.5,11.5H4 M17.5,11.5H14 M1.5,17 L4.5,14.5 M16.5,17 L13.5,14.5" stroke="#c4c4c4" stroke-width="1.5"/></svg>
<svg style="left:778px;top:737px" width="16" height="13" viewBox="0 0 16 13"><rect x="0" y="4" width="2.5" height="5" fill="#c4c4c4"/><path d="M3.5,4 L8.5,0.5 V12.5 L3.5,9Z" fill="#c4c4c4"/><path d="M10.5,4 Q12,6.5 10.5,9 M13,2.5 Q15.5,6.5 13,10.5" fill="none" stroke="#c4c4c4" stroke-width="1.4"/></svg>
<svg style="left:810px;top:737px" width="18" height="12" viewBox="0 0 18 12"><rect x="0.75" y="0.75" width="16.5" height="10.5" fill="none" stroke="#c4c4c4" stroke-width="1.4"/><path d="M3,3.5H15M3,6H15M5,8.7H13" stroke="#c4c4c4" stroke-width="1.3" stroke-dasharray="1.6 1.2"/></svg>
<div class="t" style="left:842px;top:735px;font-size:16px;color:#c4c4c4;">Stats</div>
<div class="t" style="left:890px;top:735px;font-size:16px;color:#c4c4c4;">Gizmos</div>
<svg style="left:956px;top:740px" width="10" height="6"><path d="M0,0 L10,0 L5.0,6Z" fill="#c4c4c4"/></svg>
<div class="a" style="left:0;top:757px;width:973px;height:355px;background:#8aa3c8;"></div>
<div class="a" style="left:2px;top:759px;width:969px;height:353px;overflow:hidden;border-radius:3px 3px 0 0;
background:linear-gradient(180deg,#a2a9b7 0px,#a4adbc 50px,#a9b5c6 100px,#b7c6d6 135px,#cddbe5 155px,#e2ebee 172px,#dde5e7 180px)">
<svg style="left:0;top:0" width="969" height="353" viewBox="0 0 969 353">
<defs><filter id="gb" x="-10%" y="-50%" width="120%" height="200%"><feGaussianBlur stdDeviation="4"/></filter></defs>
<path d="M-40,199 Q485,171 1009,199 L1009,400 L-40,400Z" fill="#a7a4a2" filter="url(#gb)"/>
<path d="M-40,205 Q485,179 1009,205 L1009,400 L-40,400Z" fill="#a19e9c"/>
</svg></div>
<div class="a" style="left:754px;top:778px;width:196px;height:34px;background:#f3f3f3;border:1px solid #a9a9a9;border-radius:3px"></div>
<div class="t" style="left:786px;top:780px;font-size:30px;color:#333333;">Start Host</div>
<div class="a" style="left:754px;top:818px;width:196px;height:34px;background:#f3f3f3;border:1px solid #a9a9a9;border-radius:3px"></div>
<div class="t" style="left:778px;top:820px;font-size:30px;color:#333333;">Start Client</div>
<div class="a" style="left:979px;top:99px;width:120px;height:30px;background:#383838;border-radius:4px 4px 0 0"></div>
<div class="a" style="left:979px;top:129px;width:485px;height:569px;background:#383838;"></div>
<svg style="left:992px;top:110px" width="14" height="11" viewBox="0 0 14 11"><path d="M4,1.5H14M6,5.5H14M6,9.5H14" stroke="#c4c4c4" stroke-width="1.4"/><path d="M0,1.5 L2.5,0 V3Z" fill="#c4c4c4"/><rect x="1.5" y="4.7" width="2" height="1.6" fill="#c4c4c4"/><rect x="1.5" y="8.7" width="2" height="1.6" fill="#c4c4c4"/></svg>
<div class="t" style="left:1011px;top:107.8px;font-size:16px;color:#c4c4c4;">Hierarchy</div>
<svg style="left:1420px;top:108px" width="11" height="12" viewBox="0 0 11 12"><path d="M8.6,6 V3.2 A2.6,2.6 0 0 0 3.4,2.6" fill="none" stroke="#c4c4c4" stroke-width="1.2"/><rect x="0.6" y="6.2" width="9.8" height="5.4" rx="0.6" fill="none" stroke="#c4c4c4" stroke-width="1.2"/></svg>
<svg style="left:1445px;top:107px" width="4" height="13"><circle cx="2" cy="1.8" r="1.5" fill="#c4c4c4"/><circle cx="2" cy="6.5" r="1.5" fill="#c4c4c4"/><circle cx="2" cy="11.2" r="1.5" fill="#c4c4c4"/></svg>
<svg style="left:987px;top:135px" width="16" height="16" viewBox="0 0 16 16"><path d="M8,0.5V15.5M0.5,8H15.5" stroke="#c4c4c4" stroke-width="1.6"/></svg>
<svg style="left:1007px;top:140px" width="10" height="6"><path d="M0,0 L10,0 L5.0,6Z" fill="#c4c4c4"/></svg>
<div class="a" style="left:1054px;top:132px;width:406px;height:20px;background:#2a2a2a;border-radius:4px;border:1px solid #242424"></div>
<svg style="left:1058px;top:137px" width="13" height="10" viewBox="0 0 13 10"><circle cx="3.8" cy="3.8" r="2.8" fill="none" stroke="#c4c4c4" stroke-width="1.2"/><path d="M5.8,5.8 L9,9 M10,3.5 L12,3.5 L11,5Z" stroke="#c4c4c4" stroke-width="1.2" fill="#c4c4c4"/></svg>
<div class="t" style="left:1076px;top:134.3px;font-size:16px;color:#7a7a7a;">All</div>
<div class="a" style="left:1438px;top:132px;width:22px;height:20px;background:#333333;border-radius:0 4px 4px 0"></div>
<svg style="left:1441px;top:135px" width="15" height="15" viewBox="0 0 15 15"><rect x="3.5" y="0.6" width="10.9" height="10.9" fill="none" stroke="#9a9a9a" stroke-width="1.1"/><rect x="0.6" y="9" width="5" height="5" fill="#2a2a2a" stroke="#9a9a9a" stroke-width="1.1"/><path d="M5,9.5 L11.5,3 M7.5,3 H11.5 V7" fill="none" stroke="#9a9a9a" stroke-width="1.1"/></svg>
<div class="a" style="left:979px;top:154px;width:483px;height:20px;background:#2b2b2b;"></div>
<svg style="left:1022px;top:161px" width="10" height="8"><path d="M0,0 L10,0 L5.0,8Z" fill="#7a7a7a"/></svg>
<svg style="left:1034px;top:152px" width="24" height="24" viewBox="0 0 24 24"><g fill="none" stroke="#ececec" stroke-width="2.4" stroke-linejoin="miter"><path d="M6,15.5 V8.5 L10.5,5.8"/><path d="M18,15.5 V8.5 L13.5,5.8"/><path d="M7.5,10 L12,12.6 L16.5,10 M12,12.6 V18.5"/><path d="M6.8,17.5 L12,20.5 L17.2,17.5"/></g></svg>
<div class="t" style="left:1060px;top:156.8px;font-size:15px;color:#e0e0e0;font-weight:700;">Main*</div>
<svg style="left:1446px;top:158px" width="4" height="13"><circle cx="2" cy="1.8" r="1.5" fill="#c4c4c4"/><circle cx="2" cy="6.5" r="1.5" fill="#c4c4c4"/><circle cx="2" cy="11.2" r="1.5" fill="#c4c4c4"/></svg>
<div class="a" style="left:979px;top:174px;width:40px;height:524px;background:#333333;"></div>
<div class="a" style="left:979px;top:354px;width:483px;height:21px;background:#4d4d4d;"></div>
<div class="a" style="left:979px;top:354px;width:40px;height:21px;background:#474747;"></div>
<svg style="left:1055px;top:175px" width="17" height="18" viewBox="0 0 17 18"><path d="M8.5,0.8 L16,4.8 V13.2 L8.5,17.2 L1,13.2 V4.8Z M1,4.8 L8.5,8.8 L16,4.8 M8.5,8.8 V17.2" fill="none" stroke="#b8b8b8" stroke-width="1.25" stroke-linejoin="round"/></svg>
<div class="t" style="left:1076px;top:176.8px;font-size:16px;color:#c4c4c4;">Main Camera</div>
<svg style="left:1055px;top:195px" width="17" height="18" viewBox="0 0 17 18"><path d="M8.5,0.8 L16,4.8 V13.2 L8.5,17.2 L1,13.2 V4.8Z M1,4.8 L8.5,8.8 L16,4.8 M8.5,8.8 V17.2" fill="none" stroke="#b8b8b8" stroke-width="1.25" stroke-linejoin="round"/></svg>
<div class="t" style="left:1076px;top:196.8px;font-size:16px;color:#c4c4c4;">Directional Light</div>
<svg style="left:1055px;top:215px" width="17" height="18" viewBox="0 0 17 18"><path d="M8.5,0.8 L16,4.8 V13.2 L8.5,17.2 L1,13.2 V4.8Z M1,4.8 L8.5,8.8 L16,4.8 M8.5,8.8 V17.2" fill="none" stroke="#b8b8b8" stroke-width="1.25" stroke-linejoin="round"/></svg>
<div class="t" style="left:1076px;top:216.8px;font-size:16px;color:#c4c4c4;">NetworkManager</div>
<svg style="left:1055px;top:235px" width="17" height="18" viewBox="0 0 17 18"><path d="M8.5,0.8 L16,4.8 V13.2 L8.5,17.2 L1,13.2 V4.8Z M1,4.8 L8.5,8.8 L16,4.8 M8.5,8.8 V17.2" fill="none" stroke="#b8b8b8" stroke-width="1.25" stroke-linejoin="round"/></svg>
<div class="t" style="left:1076px;top:236.8px;font-size:16px;color:#c4c4c4;">ConnectPanel</div>
<svg style="left:1041px;top:239px" width="7" height="10"><path d="M0,0 L7,5.0 L0,10Z" fill="#8a8a8a"/></svg>
<svg style="left:1055px;top:255px" width="17" height="18" viewBox="0 0 17 18"><path d="M8.5,0.8 L16,4.8 V13.2 L8.5,17.2 L1,13.2 V4.8Z M1,4.8 L8.5,8.8 L16,4.8 M8.5,8.8 V17.2" fill="none" stroke="#b8b8b8" stroke-width="1.25" stroke-linejoin="round"/></svg>
<div class="t" style="left:1076px;top:256.8px;font-size:16px;color:#c4c4c4;">EventSystem</div>
<svg style="left:1055px;top:275px" width="17" height="18" viewBox="0 0 17 18"><path d="M8.5,0.8 L16,4.8 V13.2 L8.5,17.2 L1,13.2 V4.8Z M1,4.8 L8.5,8.8 L16,4.8 M8.5,8.8 V17.2" fill="none" stroke="#b8b8b8" stroke-width="1.25" stroke-linejoin="round"/></svg>
<div class="t" style="left:1076px;top:276.8px;font-size:16px;color:#c4c4c4;">RespawnPoints</div>
<svg style="left:1039px;top:280px" width="10" height="8"><path d="M0,0 L10,0 L5.0,8Z" fill="#8a8a8a"/></svg>
<svg style="left:1072px;top:295px" width="17" height="18" viewBox="0 0 17 18"><path d="M8.5,0.8 L16,4.8 V13.2 L8.5,17.2 L1,13.2 V4.8Z M1,4.8 L8.5,8.8 L16,4.8 M8.5,8.8 V17.2" fill="none" stroke="#b8b8b8" stroke-width="1.25" stroke-linejoin="round"/></svg>
<div class="t" style="left:1093px;top:296.8px;font-size:16px;color:#c4c4c4;">Respawn_1</div>
<svg style="left:1072px;top:315px" width="17" height="18" viewBox="0 0 17 18"><path d="M8.5,0.8 L16,4.8 V13.2 L8.5,17.2 L1,13.2 V4.8Z M1,4.8 L8.5,8.8 L16,4.8 M8.5,8.8 V17.2" fill="none" stroke="#b8b8b8" stroke-width="1.25" stroke-linejoin="round"/></svg>
<div class="t" style="left:1093px;top:316.8px;font-size:16px;color:#c4c4c4;">Respawn_2</div>
<svg style="left:1072px;top:335px" width="17" height="18" viewBox="0 0 17 18"><path d="M8.5,0.8 L16,4.8 V13.2 L8.5,17.2 L1,13.2 V4.8Z M1,4.8 L8.5,8.8 L16,4.8 M8.5,8.8 V17.2" fill="none" stroke="#b8b8b8" stroke-width="1.25" stroke-linejoin="round"/></svg>
<div class="t" style="left:1093px;top:336.8px;font-size:16px;color:#c4c4c4;">Respawn_3</div>
<svg style="left:1072px;top:355px" width="17" height="18" viewBox="0 0 17 18"><path d="M8.5,0.8 L16,4.8 V13.2 L8.5,17.2 L1,13.2 V4.8Z M1,4.8 L8.5,8.8 L16,4.8 M8.5,8.8 V17.2" fill="none" stroke="#b8b8b8" stroke-width="1.25" stroke-linejoin="round"/></svg>
<div class="t" style="left:1093px;top:356.8px;font-size:16px;color:#c4c4c4;">Respawn_4</div>
<div class="a" style="left:1466px;top:99px;width:119px;height:30px;background:#383838;border-radius:4px 4px 0 0;border-top:3px solid #3a79bb"></div>
<div class="a" style="left:1466px;top:129px;width:451px;height:983px;background:#383838;"></div>
<svg style="left:1480px;top:109px" width="13" height="13" viewBox="0 0 13 13"><circle cx="6.5" cy="6.5" r="6.3" fill="#c4c4c4"/><rect x="5.5" y="5.2" width="2.2" height="5.3" fill="#383838"/><circle cx="6.6" cy="3.3" r="1.25" fill="#383838"/></svg>
<div class="t" style="left:1498px;top:107.8px;font-size:16px;color:#c4c4c4;">Inspector</div>
<svg style="left:1875px;top:108px" width="11" height="12" viewBox="0 0 11 12"><path d="M8.6,6 V3.2 A2.6,2.6 0 0 0 3.4,2.6" fill="none" stroke="#c4c4c4" stroke-width="1.2"/><rect x="0.6" y="6.2" width="9.8" height="5.4" rx="0.6" fill="none" stroke="#c4c4c4" stroke-width="1.2"/></svg>
<svg style="left:1899px;top:107px" width="4" height="13"><circle cx="2" cy="1.8" r="1.5" fill="#c4c4c4"/><circle cx="2" cy="6.5" r="1.5" fill="#c4c4c4"/><circle cx="2" cy="11.2" r="1.5" fill="#c4c4c4"/></svg>
<svg style="left:1474px;top:141px" width="27" height="28" viewBox="0 0 27 28"><path d="M13.5,1.5 L25,7.5 V20 L13.5,26 L2,20 V7.5Z M2,7.5 L13.5,13.5 L25,7.5 M13.5,13.5 V26" fill="none" stroke="#c4c4c4" stroke-width="1.6" stroke-linejoin="round"/></svg>
<svg style="left:1499px;top:168px" width="9" height="5"><path d="M0,0 L9,0 L4.5,5Z" fill="#c4c4c4"/></svg>
<div class="a" style="left:1522px;top:143px;width:17px;height:18px;background:#2a2a2a;border-radius:3px;border:1px solid #232323"></div>
<svg style="left:1524px;top:146px" width="13" height="11" viewBox="0 0 13 11"><path d="M1.5,5.5 L5,9 L11.5,2" fill="none" stroke="#e8e8e8" stroke-width="1.8"/></svg>
<div class="a" style="left:1547px;top:141px;width:271px;height:22px;background:#2a2a2a;border-radius:4px;border:1px solid #232323"></div>
<div class="t" style="left:1551px;top:144.8px;font-size:15px;color:#dcdcdc;font-weight:700;">Respawn_4</div>
<div class="a" style="left:1822px;top:143px;width:17px;height:18px;background:#2a2a2a;border-radius:3px;border:1px solid #232323"></div>
<div class="t" style="left:1845px;top:143.8px;font-size:16px;color:#c4c4c4;">Static</div>
<svg style="left:1900px;top:149px" width="11" height="6"><path d="M0,0 L11,0 L5.5,6Z" fill="#c4c4c4"/></svg>
<div class="t" style="left:1517px;top:173.8px;font-size:16px;color:#c4c4c4;">Tag</div>
<div class="a" style="left:1548px;top:171px;width:159px;height:21px;background:#515151;border-radius:4px"></div>
<div class="t" style="left:1552px;top:173.3px;font-size:16px;color:#d0d0d0;">Untagged</div>
<svg style="left:1690px;top:178px" width="10" height="6"><path d="M0,0 L10,0 L5.0,6Z" fill="#c4c4c4"/></svg>
<div class="t" style="left:1722px;top:173.8px;font-size:16px;color:#c4c4c4;">Layer</div>
<div class="a" style="left:1767px;top:171px;width:145px;height:21px;background:#515151;border-radius:4px"></div>
<div class="t" style="left:1771px;top:173.3px;font-size:16px;color:#d0d0d0;">Default</div>
<svg style="left:1895px;top:178px" width="10" height="6"><path d="M0,0 L10,0 L5.0,6Z" fill="#c4c4c4"/></svg>
<div class="a" style="left:1466px;top:203px;width:451px;height:1px;background:#242424;"></div>
<div class="a" style="left:1466px;top:204px;width:451px;height:26px;background:#3e3e3e;"></div>
<div class="a" style="left:1466px;top:230px;width:451px;height:1px;background:#303030;"></div>
<svg style="left:1474px;top:213px" width="10" height="9"><path d="M0,0 L10,0 L5.0,9Z" fill="#7a7a7a"/></svg>
<svg style="left:1492px;top:209px" width="18" height="15" viewBox="0 0 18 15"><path d="M9,1 V7.5" stroke="#84d13a" stroke-width="2.2"/><path d="M9,8 L2,12.5" stroke="#4fb7e8" stroke-width="2.2"/><path d="M9,8 L16,12.5" stroke="#e8643a" stroke-width="2.2"/></svg>
<div class="t" style="left:1542px;top:209.8px;font-size:15px;color:#d8d8d8;font-weight:700;">Transform</div>
<svg style="left:1846px;top:210px" width="14" height="14" viewBox="0 0 14 14"><circle cx="7" cy="7" r="6.7" fill="#c4c4c4"/><path d="M4.8,5.3 A2.2,2.2 0 1 1 7.8,7.3 Q7,7.7 7,8.8" fill="none" stroke="#3e3e3e" stroke-width="1.7"/><circle cx="7" cy="10.8" r="1" fill="#3e3e3e"/></svg>
<svg style="left:1871px;top:210px" width="14" height="14" viewBox="0 0 14 14"><path d="M0,4H14M0,10H14" stroke="#c4c4c4" stroke-width="1.5"/><rect x="8" y="1" width="2" height="6" fill="#c4c4c4"/><rect x="4" y="7" width="2" height="6" fill="#c4c4c4"/></svg>
<svg style="left:1901px;top:210px" width="4" height="13"><circle cx="2" cy="1.8" r="1.5" fill="#c4c4c4"/><circle cx="2" cy="6.5" r="1.5" fill="#c4c4c4"/><circle cx="2" cy="11.2" r="1.5" fill="#c4c4c4"/></svg>
<div class="t" style="left:1490px;top:240.3px;font-size:16px;color:#c4c4c4;">Position</div>
<div class="t" style="left:1647px;top:240.3px;font-size:16px;color:#c4c4c4;">X</div>
<div class="a" style="left:1665px;top:236px;width:67px;height:23px;background:#2a2a2a;border-radius:4px;border-top:1px solid #1c1c1c"></div>
<div class="t" style="left:1669px;top:240.3px;font-size:16px;color:#c4c4c4;">0</div>
<div class="t" style="left:1738px;top:240.3px;font-size:16px;color:#c4c4c4;">Y</div>
<div class="a" style="left:1756px;top:236px;width:67px;height:23px;background:#2a2a2a;border-radius:4px;border-top:1px solid #1c1c1c"></div>
<div class="t" style="left:1760px;top:240.3px;font-size:16px;color:#c4c4c4;">0</div>
<div class="t" style="left:1829px;top:240.3px;font-size:16px;color:#5c9ee8;">Z</div>
<div class="a" style="left:1847px;top:236px;width:67px;height:23px;background:#2a2a2a;border-radius:4px;border:1px solid #3a79bb"></div>
<div class="a" style="left:1856px;top:239px;width:1px;height:17px;background:#e0e0e0;"></div>
<div class="t" style="left:1851px;top:240.3px;font-size:16px;color:#c4c4c4;">-</div>
<div class="t" style="left:1857px;top:240.3px;font-size:16px;color:#c4c4c4;">3</div>
<div class="t" style="left:1490px;top:265.3px;font-size:16px;color:#c4c4c4;">Rotation</div>
<div class="t" style="left:1647px;top:265.3px;font-size:16px;color:#c4c4c4;">X</div>
<div class="a" style="left:1665px;top:261px;width:67px;height:23px;background:#2a2a2a;border-radius:4px;border-top:1px solid #1c1c1c"></div>
<div class="t" style="left:1669px;top:265.3px;font-size:16px;color:#c4c4c4;">0</div>
<div class="t" style="left:1738px;top:265.3px;font-size:16px;color:#c4c4c4;">Y</div>
<div class="a" style="left:1756px;top:261px;width:67px;height:23px;background:#2a2a2a;border-radius:4px;border-top:1px solid #1c1c1c"></div>
<div class="t" style="left:1760px;top:265.3px;font-size:16px;color:#c4c4c4;">0</div>
<div class="t" style="left:1829px;top:265.3px;font-size:16px;color:#c4c4c4;">Z</div>
<div class="a" style="left:1847px;top:261px;width:67px;height:23px;background:#2a2a2a;border-radius:4px;border-top:1px solid #1c1c1c"></div>
<div class="t" style="left:1851px;top:265.3px;font-size:16px;color:#c4c4c4;">0</div>
<div class="t" style="left:1490px;top:289.8px;font-size:16px;color:#c4c4c4;">Scale</div>
<div class="t" style="left:1647px;top:289.8px;font-size:16px;color:#c4c4c4;">X</div>
<div class="a" style="left:1665px;top:286px;width:67px;height:23px;background:#2a2a2a;border-radius:4px;border-top:1px solid #1c1c1c"></div>
<div class="t" style="left:1669px;top:289.8px;font-size:16px;color:#c4c4c4;">1</div>
<div class="t" style="left:1738px;top:289.8px;font-size:16px;color:#c4c4c4;">Y</div>
<div class="a" style="left:1756px;top:286px;width:67px;height:23px;background:#2a2a2a;border-radius:4px;border-top:1px solid #1c1c1c"></div>
<div class="t" style="left:1760px;top:289.8px;font-size:16px;color:#c4c4c4;">1</div>
<div class="t" style="left:1829px;top:289.8px;font-size:16px;color:#c4c4c4;">Z</div>
<div class="a" style="left:1847px;top:286px;width:67px;height:23px;background:#2a2a2a;border-radius:4px;border-top:1px solid #1c1c1c"></div>
<div class="t" style="left:1851px;top:289.8px;font-size:16px;color:#c4c4c4;">1</div>
<svg style="left:1620px;top:291px" width="16" height="13" viewBox="0 0 16 13"><path d="M5,3 H3.5 A3.5,3.5 0 0 0 3.5,10 H5 M11,3 H12.5 A3.5,3.5 0 0 1 12.5,10 H11 M5.5,6.5 H10.5" fill="none" stroke="#c4c4c4" stroke-width="1.3"/><path d="M1,0.5 L15,12.5" stroke="#383838" stroke-width="2.5"/><path d="M1.5,0.5 L14.5,12.5" stroke="#c4c4c4" stroke-width="1.2"/></svg>
<div class="a" style="left:1466px;top:321px;width:451px;height:1px;background:#242424;"></div>
<div class="a" style="left:1549px;top:333px;width:285px;height:28px;background:#585858;border-radius:4px;border-bottom:1px solid #2a2a2a"></div>
<div class="t" style="left:1635px;top:339.3px;font-size:16px;color:#dcdcdc;">Add Component</div>
<div class="a" style="left:975px;top:700px;width:102px;height:30px;background:#383838;border-radius:4px 4px 0 0"></div>
<div class="a" style="left:975px;top:730px;width:489px;height:382px;background:#383838;"></div>
<svg style="left:988px;top:709px" width="16" height="14" viewBox="0 0 16 14"><path d="M0.5,1.5 Q0.5,0.5 1.5,0.5 H5.5 L7,2.5 H14.5 Q15.5,2.5 15.5,3.5 V12.5 Q15.5,13.5 14.5,13.5 H1.5 Q0.5,13.5 0.5,12.5Z" fill="#c4c4c4"/><path d="M0.5,4 H15.5" stroke="#383838" stroke-width="0.8" opacity="0.5"/></svg>
<div class="t" style="left:1007px;top:708.3px;font-size:16px;color:#c4c4c4;">Project</div>
<svg style="left:1420px;top:709px" width="11" height="12" viewBox="0 0 11 12"><path d="M8.6,6 V3.2 A2.6,2.6 0 0 0 3.4,2.6" fill="none" stroke="#c4c4c4" stroke-width="1.2"/><rect x="0.6" y="6.2" width="9.8" height="5.4" rx="0.6" fill="none" stroke="#c4c4c4" stroke-width="1.2"/></svg>
<svg style="left:1445px;top:709px" width="4" height="13"><circle cx="2" cy="1.8" r="1.5" fill="#c4c4c4"/><circle cx="2" cy="6.5" r="1.5" fill="#c4c4c4"/><circle cx="2" cy="11.2" r="1.5" fill="#c4c4c4"/></svg>
<svg style="left:984px;top:735px" width="16" height="16" viewBox="0 0 16 16"><path d="M8,0.5V15.5M0.5,8H15.5" stroke="#c4c4c4" stroke-width="1.6"/></svg>
<svg style="left:1004px;top:740px" width="10" height="6"><path d="M0,0 L10,0 L5.0,6Z" fill="#c4c4c4"/></svg>
<div class="a" style="left:1031px;top:734px;width:246px;height:19px;background:#2a2a2a;border-radius:4px;border:1px solid #242424"></div>
<svg style="left:1036px;top:738px" width="11" height="11" viewBox="0 0 11 11"><circle cx="4" cy="4" r="3" fill="none" stroke="#c4c4c4" stroke-width="1.3"/><path d="M6.2,6.2 L9.5,9.5" stroke="#c4c4c4" stroke-width="1.5"/></svg>
<div class="a" style="left:1256px;top:734px;width:21px;height:19px;background:#333333;border-radius:0 4px 4px 0"></div>
<svg style="left:1259px;top:736px" width="15" height="15" viewBox="0 0 15 15"><rect x="3.5" y="0.6" width="10.9" height="10.9" fill="none" stroke="#9a9a9a" stroke-width="1.1"/><rect x="0.6" y="9" width="5" height="5" fill="#2a2a2a" stroke="#9a9a9a" stroke-width="1.1"/><path d="M5,9.5 L11.5,3 M7.5,3 H11.5 V7" fill="none" stroke="#9a9a9a" stroke-width="1.1"/></svg>
<div class="a" style="left:1281px;top:731px;width:1px;height:25px;background:#2a2a2a"></div>
<div class="a" style="left:1314px;top:731px;width:1px;height:25px;background:#2a2a2a"></div>
<div class="a" style="left:1346px;top:731px;width:1px;height:25px;background:#2a2a2a"></div>
<div class="a" style="left:1379px;top:731px;width:1px;height:25px;background:#2a2a2a"></div>
<div class="a" style="left:1411px;top:731px;width:1px;height:25px;background:#2a2a2a"></div>
<svg style="left:1288px;top:735px" width="17" height="17" viewBox="0 0 17 17"><rect x="1" y="1" width="7" height="7" rx="1" fill="#c4c4c4"/><circle cx="4.5" cy="12.5" r="4" fill="#c4c4c4"/><path d="M11,5 L16,14 H6Z" fill="#c4c4c4"/></svg>
<svg style="left:1320px;top:736px" width="16" height="15" viewBox="0 0 16 15"><path d="M8,0.5 H15 V7.5 L7.5,15 L0.5,8Z" fill="#c4c4c4"/><circle cx="11.5" cy="4" r="1.5" fill="#383838"/></svg>
<svg style="left:1353px;top:735px" width="17" height="17" viewBox="0 0 17 17"><circle cx="8.5" cy="8.5" r="8.3" fill="#c4c4c4"/><rect x="7.2" y="3.5" width="2.6" height="6.5" fill="#383838"/><circle cx="8.5" cy="12.8" r="1.4" fill="#383838"/></svg>
<svg style="left:1387px;top:736px" width="16" height="15" viewBox="0 0 16 15"><path d="M8,0.5 L10.2,5.3 L15.5,5.8 L11.5,9.3 L12.7,14.5 L8,11.8 L3.3,14.5 L4.5,9.3 L0.5,5.8 L5.8,5.3Z" fill="#8a8a8a"/></svg>
<svg style="left:1418px;top:738px" width="19" height="12" viewBox="0 0 19 12"><path d="M1,6 Q9.5,-2.5 18,6 Q9.5,14.5 1,6Z" fill="#6a6a6a"/><circle cx="9.5" cy="6" r="3" fill="#383838"/><circle cx="9.5" cy="6" r="1.8" fill="#6a6a6a"/></svg>
<div class="t" style="left:1438px;top:735.3px;font-size:16px;color:#c4c4c4;">26</div>
<div class="a" style="left:975px;top:756px;width:489px;height:1px;background:#2a2a2a;"></div>
<svg style="left:980px;top:760px" width="0" height="0"><path d="M0,0 L0,0.0 L0,0Z" fill="#8a8a8a"/></svg>
<svg style="left:980px;top:761px" width="10" height="9"><path d="M0,0 L10,0 L5.0,9Z" fill="#8a8a8a"/></svg>
<svg style="left:998px;top:758px" width="14" height="14" viewBox="0 0 14 14"><path d="M7,0.5 L8.9,4.9 L13.5,5.3 L10,8.4 L11,13 L7,10.6 L3,13 L4,8.4 L0.5,5.3 L5.1,4.9Z" fill="#c4c4c4"/></svg>
<div class="t" style="left:1019px;top:758.3px;font-size:15px;color:#d8d8d8;font-weight:700;">Favorites</div>
<svg style="left:1014px;top:777.5px" width="15" height="15" viewBox="0 0 15 15"><circle cx="6" cy="6" r="4.8" fill="none" stroke="#c4c4c4" stroke-width="1.4"/><path d="M9.5,9.5 L14,14" stroke="#c4c4c4" stroke-width="1.8"/></svg>
<div class="t" style="left:1035px;top:777.8px;font-size:16px;color:#c4c4c4;">All Materials</div>
<svg style="left:1014px;top:797.5px" width="15" height="15" viewBox="0 0 15 15"><circle cx="6" cy="6" r="4.8" fill="none" stroke="#c4c4c4" stroke-width="1.4"/><path d="M9.5,9.5 L14,14" stroke="#c4c4c4" stroke-width="1.8"/></svg>
<div class="t" style="left:1035px;top:797.8px;font-size:16px;color:#c4c4c4;">All Models</div>
<svg style="left:1014px;top:817.5px" width="15" height="15" viewBox="0 0 15 15"><circle cx="6" cy="6" r="4.8" fill="none" stroke="#c4c4c4" stroke-width="1.4"/><path d="M9.5,9.5 L14,14" stroke="#c4c4c4" stroke-width="1.8"/></svg>
<div class="t" style="left:1035px;top:817.8px;font-size:16px;color:#c4c4c4;">All Prefabs</div>
<div class="a" style="left:975px;top:855px;width:256px;height:20px;background:#4d4d4d;"></div>
<svg style="left:980px;top:861px" width="10" height="9"><path d="M0,0 L10,0 L5.0,9Z" fill="#8a8a8a"/></svg>
<svg style="left:997px;top:857px" width="18" height="14" viewBox="0 0 18 14"><path d="M0.5,1.5 Q0.5,0.5 1.5,0.5 H5.5 L7,2.5 H13.5 Q14.5,2.5 14.5,3.5 V5 H4 L0.5,13.5Z" fill="#c4c4c4"/><path d="M4,6 H17.5 L14,13.5 H0.5Z" fill="#c4c4c4"/></svg>
<div class="t" style="left:1019px;top:857.8px;font-size:15px;color:#e0e0e0;font-weight:700;">Assets</div>
<svg style="left:1014px;top:878px" width="16" height="14" viewBox="0 0 16 14"><path d="M0.5,1.5 Q0.5,0.5 1.5,0.5 H5.5 L7,2.5 H14.5 Q15.5,2.5 15.5,3.5 V12.5 Q15.5,13.5 14.5,13.5 H1.5 Q0.5,13.5 0.5,12.5Z" fill="#c4c4c4"/><path d="M0.5,4 H15.5" stroke="#383838" stroke-width="0.8" opacity="0.5"/></svg>
<div class="t" style="left:1035px;top:877.3px;font-size:16px;color:#c4c4c4;">Material</div>
<svg style="left:1014px;top:898px" width="16" height="14" viewBox="0 0 16 14"><path d="M0.5,1.5 Q0.5,0.5 1.5,0.5 H5.5 L7,2.5 H14.5 Q15.5,2.5 15.5,3.5 V12.5 Q15.5,13.5 14.5,13.5 H1.5 Q0.5,13.5 0.5,12.5Z" fill="#c4c4c4"/><path d="M0.5,4 H15.5" stroke="#383838" stroke-width="0.8" opacity="0.5"/></svg>
<div class="t" style="left:1035px;top:897.3px;font-size:16px;color:#c4c4c4;">Prefabs</div>
<svg style="left:1014px;top:918px" width="16" height="14" viewBox="0 0 16 14"><path d="M0.5,1.5 Q0.5,0.5 1.5,0.5 H5.5 L7,2.5 H14.5 Q15.5,2.5 15.5,3.5 V12.5 Q15.5,13.5 14.5,13.5 H1.5 Q0.5,13.5 0.5,12.5Z" fill="#c4c4c4"/><path d="M0.5,4 H15.5" stroke="#383838" stroke-width="0.8" opacity="0.5"/></svg>
<div class="t" style="left:1035px;top:917.3px;font-size:16px;color:#c4c4c4;">Scenes</div>
<svg style="left:1014px;top:938px" width="16" height="14" viewBox="0 0 16 14"><path d="M0.5,1.5 Q0.5,0.5 1.5,0.5 H5.5 L7,2.5 H14.5 Q15.5,2.5 15.5,3.5 V12.5 Q15.5,13.5 14.5,13.5 H1.5 Q0.5,13.5 0.5,12.5Z" fill="#c4c4c4"/><path d="M0.5,4 H15.5" stroke="#383838" stroke-width="0.8" opacity="0.5"/></svg>
<div class="t" style="left:1035px;top:937.3px;font-size:16px;color:#c4c4c4;">Scripts</div>
<svg style="left:1014px;top:958px" width="16" height="14" viewBox="0 0 16 14"><path d="M0.5,1.5 Q0.5,0.5 1.5,0.5 H5.5 L7,2.5 H14.5 Q15.5,2.5 15.5,3.5 V12.5 Q15.5,13.5 14.5,13.5 H1.5 Q0.5,13.5 0.5,12.5Z" fill="#c4c4c4"/><path d="M0.5,4 H15.5" stroke="#383838" stroke-width="0.8" opacity="0.5"/></svg>
<div class="t" style="left:1035px;top:957.3px;font-size:16px;color:#c4c4c4;">Settings</div>
<svg style="left:1014px;top:978px" width="16" height="14" viewBox="0 0 16 14"><path d="M0.5,1.5 Q0.5,0.5 1.5,0.5 H5.5 L7,2.5 H14.5 Q15.5,2.5 15.5,3.5 V12.5 Q15.5,13.5 14.5,13.5 H1.5 Q0.5,13.5 0.5,12.5Z" fill="#c4c4c4"/><path d="M0.5,4 H15.5" stroke="#383838" stroke-width="0.8" opacity="0.5"/></svg>
<div class="t" style="left:1035px;top:977.3px;font-size:16px;color:#c4c4c4;">TextMesh Pro</div>
<svg style="left:1000px;top:980px" width="7" height="10"><path d="M0,0 L7,5.0 L0,10Z" fill="#8a8a8a"/></svg>
<svg style="left:1014px;top:998px" width="16" height="14" viewBox="0 0 16 14"><path d="M0.5,1.5 Q0.5,0.5 1.5,0.5 H5.5 L7,2.5 H14.5 Q15.5,2.5 15.5,3.5 V12.5 Q15.5,13.5 14.5,13.5 H1.5 Q0.5,13.5 0.5,12.5Z" fill="#c4c4c4"/><path d="M0.5,4 H15.5" stroke="#383838" stroke-width="0.8" opacity="0.5"/></svg>
<div class="t" style="left:1035px;top:997.3px;font-size:16px;color:#c4c4c4;">TutorialInfo</div>
<svg style="left:1000px;top:1000px" width="7" height="10"><path d="M0,0 L7,5.0 L0,10Z" fill="#8a8a8a"/></svg>
<svg style="left:981px;top:1020px" width="7" height="10"><path d="M0,0 L7,5.0 L0,10Z" fill="#8a8a8a"/></svg>
<svg style="left:997px;top:1018px" width="16" height="14" viewBox="0 0 16 14"><path d="M0.5,1.5 Q0.5,0.5 1.5,0.5 H5.5 L7,2.5 H14.5 Q15.5,2.5 15.5,3.5 V12.5 Q15.5,13.5 14.5,13.5 H1.5 Q0.5,13.5 0.5,12.5Z" fill="#c4c4c4"/><path d="M0.5,4 H15.5" stroke="#383838" stroke-width="0.8" opacity="0.5"/></svg>
<div class="t" style="left:1019px;top:1017.8px;font-size:15px;color:#d8d8d8;font-weight:700;">Packages</div>
<div class="a" style="left:1231px;top:757px;width:1px;height:355px;background:#232323;"></div>
<div class="a" style="left:1232px;top:757px;width:232px;height:355px;background:#353535;"></div>
<div class="a" style="left:1232px;top:757px;width:232px;height:25px;background:#3e3e3e;"></div>
<div class="t" style="left:1237px;top:761.3px;font-size:15px;color:#d0d0d0;font-weight:700;">Assets</div>
<svg style="left:1254px;top:786px" width="16" height="14" viewBox="0 0 16 14"><path d="M0.5,1.5 Q0.5,0.5 1.5,0.5 H5.5 L7,2.5 H14.5 Q15.5,2.5 15.5,3.5 V12.5 Q15.5,13.5 14.5,13.5 H1.5 Q0.5,13.5 0.5,12.5Z" fill="#c4c4c4"/><path d="M0.5,4 H15.5" stroke="#383838" stroke-width="0.8" opacity="0.5"/></svg>
<div class="t" style="left:1274px;top:785.3px;font-size:16px;color:#c4c4c4;">Material</div>
<svg style="left:1254px;top:806px" width="16" height="14" viewBox="0 0 16 14"><path d="M0.5,1.5 Q0.5,0.5 1.5,0.5 H5.5 L7,2.5 H14.5 Q15.5,2.5 15.5,3.5 V12.5 Q15.5,13.5 14.5,13.5 H1.5 Q0.5,13.5 0.5,12.5Z" fill="#c4c4c4"/><path d="M0.5,4 H15.5" stroke="#383838" stroke-width="0.8" opacity="0.5"/></svg>
<div class="t" style="left:1274px;top:805.3px;font-size:16px;color:#c4c4c4;">Prefabs</div>
<svg style="left:1254px;top:826px" width="16" height="14" viewBox="0 0 16 14"><path d="M0.5,1.5 Q0.5,0.5 1.5,0.5 H5.5 L7,2.5 H14.5 Q15.5,2.5 15.5,3.5 V12.5 Q15.5,13.5 14.5,13.5 H1.5 Q0.5,13.5 0.5,12.5Z" fill="#c4c4c4"/><path d="M0.5,4 H15.5" stroke="#383838" stroke-width="0.8" opacity="0.5"/></svg>
<div class="t" style="left:1274px;top:825.3px;font-size:16px;color:#c4c4c4;">Scenes</div>
<svg style="left:1254px;top:846px" width="16" height="14" viewBox="0 0 16 14"><path d="M0.5,1.5 Q0.5,0.5 1.5,0.5 H5.5 L7,2.5 H14.5 Q15.5,2.5 15.5,3.5 V12.5 Q15.5,13.5 14.5,13.5 H1.5 Q0.5,13.5 0.5,12.5Z" fill="#c4c4c4"/><path d="M0.5,4 H15.5" stroke="#383838" stroke-width="0.8" opacity="0.5"/></svg>
<div class="t" style="left:1274px;top:845.3px;font-size:16px;color:#c4c4c4;">Scripts</div>
<svg style="left:1254px;top:866px" width="16" height="14" viewBox="0 0 16 14"><path d="M0.5,1.5 Q0.5,0.5 1.5,0.5 H5.5 L7,2.5 H14.5 Q15.5,2.5 15.5,3.5 V12.5 Q15.5,13.5 14.5,13.5 H1.5 Q0.5,13.5 0.5,12.5Z" fill="#c4c4c4"/><path d="M0.5,4 H15.5" stroke="#383838" stroke-width="0.8" opacity="0.5"/></svg>
<div class="t" style="left:1274px;top:865.3px;font-size:16px;color:#c4c4c4;">Settings</div>
<svg style="left:1254px;top:886px" width="16" height="14" viewBox="0 0 16 14"><path d="M0.5,1.5 Q0.5,0.5 1.5,0.5 H5.5 L7,2.5 H14.5 Q15.5,2.5 15.5,3.5 V12.5 Q15.5,13.5 14.5,13.5 H1.5 Q0.5,13.5 0.5,12.5Z" fill="#c4c4c4"/><path d="M0.5,4 H15.5" stroke="#383838" stroke-width="0.8" opacity="0.5"/></svg>
<div class="t" style="left:1274px;top:885.3px;font-size:16px;color:#c4c4c4;">TextMesh Pro</div>
<svg style="left:1254px;top:906px" width="16" height="14" viewBox="0 0 16 14"><path d="M0.5,1.5 Q0.5,0.5 1.5,0.5 H5.5 L7,2.5 H14.5 Q15.5,2.5 15.5,3.5 V12.5 Q15.5,13.5 14.5,13.5 H1.5 Q0.5,13.5 0.5,12.5Z" fill="#c4c4c4"/><path d="M0.5,4 H15.5" stroke="#383838" stroke-width="0.8" opacity="0.5"/></svg>
<div class="t" style="left:1274px;top:905.3px;font-size:16px;color:#c4c4c4;">TutorialInfo</div>
<svg style="left:1254px;top:925px" width="17" height="17" viewBox="0 0 17 17"><path d="M7,1 L12.5,4 V10 L7,13 L1.5,10 V4Z M1.5,4 L7,7 L12.5,4 M7,7 V13" fill="none" stroke="#5bb4e0" stroke-width="1.2"/><text x="9" y="16.5" font-family="Liberation Sans" font-size="9" font-weight="700" fill="#e8643a">{}</text></svg>
<div class="t" style="left:1274px;top:925.3px;font-size:16px;color:#c4c4c4;">DefaultNetworkPrefabs</div>
<svg style="left:1253px;top:945px" width="17" height="17" viewBox="0 0 17 17"><path d="M0.5,2 Q4,0.5 8,2 V15 Q4,13.5 0.5,15Z" fill="#d8d8d8"/><path d="M9,2 Q12.5,0.5 16,2 V15 Q12.5,13.5 9,15Z" fill="#d8d8d8"/><path d="M12,3 L9.5,9 H12 L10.5,15.5 L15,7.5 H12.5 L14,3Z" fill="#2aa8e0"/></svg>
<div class="t" style="left:1274px;top:945.3px;font-size:16px;color:#c4c4c4;">InputSystem_Actions</div>
<svg style="left:1236px;top:948px" width="7" height="10"><path d="M0,0 L7,5.0 L0,10Z" fill="#8a8a8a"/></svg>
<svg style="left:1254px;top:965px" width="16" height="17" viewBox="0 0 16 17"><rect x="0.5" y="0.5" width="15" height="16" rx="1" fill="#e8e8e8"/><text x="8" y="13.5" font-family="Liberation Sans" font-size="13" font-weight="700" fill="#3a8a3a" text-anchor="middle">#</text></svg>
<div class="t" style="left:1274px;top:965.3px;font-size:16px;color:#c4c4c4;">PlayerControls</div>
<svg style="left:1253px;top:985px" width="17" height="17" viewBox="0 0 17 17"><path d="M0.5,2 Q4,0.5 8,2 V15 Q4,13.5 0.5,15Z" fill="#d8d8d8"/><path d="M9,2 Q12.5,0.5 16,2 V15 Q12.5,13.5 9,15Z" fill="#d8d8d8"/><path d="M12,3 L9.5,9 H12 L10.5,15.5 L15,7.5 H12.5 L14,3Z" fill="#2aa8e0"/></svg>
<div class="t" style="left:1274px;top:985.3px;font-size:16px;color:#c4c4c4;">PlayerControls</div>
<svg style="left:1236px;top:988px" width="7" height="10"><path d="M0,0 L7,5.0 L0,10Z" fill="#8a8a8a"/></svg>
<svg style="left:1254px;top:1005px" width="17" height="17" viewBox="0 0 17 17"><path d="M7,1 L12.5,4 V10 L7,13 L1.5,10 V4Z M1.5,4 L7,7 L12.5,4 M7,7 V13" fill="none" stroke="#5bb4e0" stroke-width="1.2"/><text x="9" y="16.5" font-family="Liberation Sans" font-size="9" font-weight="700" fill="#e8643a">{}</text></svg>
<div class="t" style="left:1274px;top:1005.3px;font-size:16px;color:#c4c4c4;">Readme</div>
<div class="a" style="left:1232px;top:1087px;width:232px;height:25px;background:#464646;"></div>
<div class="a" style="left:1380px;top:1098px;width:64px;height:3px;background:#6a6a6a;border-radius:2px"></div>
<div class="a" style="left:1374px;top:1093px;width:13px;height:13px;background:#9a9a9a;border-radius:50%"></div>
<div class="a" style="left:0px;top:1112px;width:1917px;height:26px;background:#161616;"></div>
<div class="a" style="left:1820px;top:1115px;width:1px;height:21px;background:#2c2c2c"></div>
<div class="a" style="left:1852px;top:1115px;width:1px;height:21px;background:#2c2c2c"></div>
<div class="a" style="left:1885px;top:1115px;width:1px;height:21px;background:#2c2c2c"></div>
<svg style="left:1828px;top:1118px" width="17" height="17" viewBox="0 0 17 17"><ellipse cx="8.5" cy="10" rx="5" ry="6" fill="#c4c4c4"/><circle cx="8.5" cy="3.8" r="2.6" fill="#c4c4c4"/><path d="M1,5.5 L4,8 M16,5.5 L13,8 M0.5,10.5H3.5 M16.5,10.5H13.5 M1.5,16 L4,13.5 M15.5,16 L13,13.5" stroke="#c4c4c4" stroke-width="1.3"/><path d="M1,1 L16,16" stroke="#191919" stroke-width="2.8"/><path d="M1,1 L16,16" stroke="#c4c4c4" stroke-width="1.2"/></svg>
<svg style="left:1860px;top:1118px" width="17" height="17" viewBox="0 0 17 17"><ellipse cx="8.5" cy="3" rx="7" ry="2.5" fill="#c4c4c4"/><path d="M1.5,5.5 Q8.5,9 15.5,5.5 V8 Q8.5,11.5 1.5,8Z M1.5,10 Q8.5,13.5 15.5,10 V12.5 Q8.5,16 1.5,12.5Z" fill="#c4c4c4"/><path d="M1,1 L16,16" stroke="#191919" stroke-width="2.8"/><path d="M1,1 L16,16" stroke="#c4c4c4" stroke-width="1.2"/></svg>
<svg style="left:1892px;top:1117px" width="18" height="18" viewBox="0 0 18 18"><circle cx="9" cy="9" r="7.8" fill="none" stroke="#c4c4c4" stroke-width="1.4"/><path d="M5.2,9.2 L8,12 L13,6.5" fill="none" stroke="#c4c4c4" stroke-width="1.6"/></svg>
<svg style="left:0;top:0" width="1917" height="1138" viewBox="0 0 1917 1138"><path d="M1281,474 L1170.6,379.5" stroke="#f4f4f4" stroke-width="1.6"/><path d="M1163,373 L1173.2,376.5 L1168.0,382.5Z" fill="#f4f4f4"/><path d="M1805,418 L1848.2,270.6" stroke="#f4f4f4" stroke-width="1.6"/><path d="M1851,261 L1852.0,271.7 L1844.3,269.5Z" fill="#f4f4f4"/></svg>
</body></html>
